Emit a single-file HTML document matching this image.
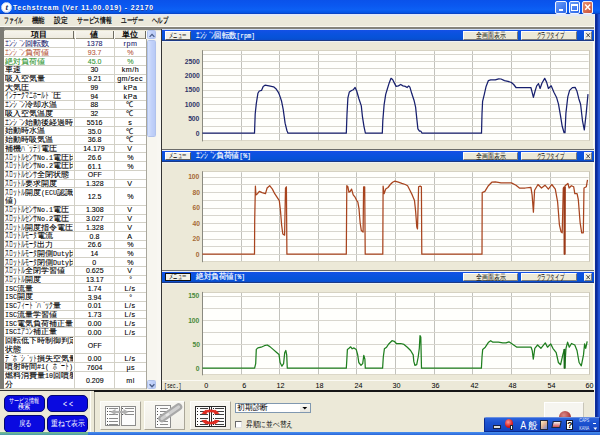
<!DOCTYPE html>
<html><head><meta charset="utf-8"><style>*{margin:0;padding:0;box-sizing:border-box}
html,body{width:600px;height:435px;overflow:hidden;background:#ece9d8;font-family:'Liberation Sans', sans-serif;position:relative}
.a{position:absolute}
.t{position:absolute;white-space:nowrap}</style></head>
<body><div class="a" style="left:0.00px;top:0.00px;width:600.00px;height:14.30px;background:linear-gradient(#0a52ea 0%,#0a58f0 40%,#0c60f4 70%,#0454e4 90%,#0a3cb8 100%)"></div><div class="a" style="left:1.2px;top:1.6px;width:11px;height:11px;border-radius:50%;background:radial-gradient(circle at 45% 40%,#ffffff 55%,#b8c8e8 100%);border:0.8px solid #c8d8f4"></div><div class="a" style="left:555.3px;top:1.3px;width:11.4px;height:12.4px;border:1px solid #f0f4ff;border-radius:2px;background:linear-gradient(135deg,#6a9cf8,#2a66e8)"></div><div class="a" style="left:568.7px;top:1.3px;width:11.4px;height:12.4px;border:1px solid #f0f4ff;border-radius:2px;background:linear-gradient(135deg,#6a9cf8,#2a66e8)"></div><div class="a" style="left:582.0px;top:1.3px;width:11.4px;height:12.4px;border:1px solid #f0f4ff;border-radius:2px;background:linear-gradient(135deg,#e8906e,#c8503a)"></div><div class="a" style="left:558.60px;top:9.40px;width:4.00px;height:1.60px;background:#fff"></div><div class="a" style="left:571.0px;top:3.6px;width:6.8px;height:7px;border:1px solid #fff;border-top-width:2px"></div><svg class="a" style="left:582px;top:1.3px" width="11.4" height="12.4"><path d="M3.2 3.6 L8.2 8.8 M8.2 3.6 L3.2 8.8" stroke="#fff" stroke-width="1.5"/></svg><div class="a" style="left:594.20px;top:14.30px;width:1.10px;height:420.70px;background:#f0f0ec"></div><div class="a" style="left:595.30px;top:14.30px;width:4.70px;height:420.70px;background:linear-gradient(90deg,#0c2c9c 0%,#0a2a98 40%,#1a48c8 60%,#2a5ad8 100%)"></div><div class="a" style="left:0.00px;top:14.30px;width:594.20px;height:12.30px;background:#ebe9db"></div><div class="a" style="left:0.00px;top:14.30px;width:594.20px;height:1.30px;background:#e2e8f4"></div><div class="a" style="left:0.00px;top:25.60px;width:594.20px;height:1.20px;background:#fbfaf4"></div><div class="a" style="left:0.00px;top:26.80px;width:594.20px;height:3.60px;background:#85847c"></div><div class="a" style="left:0.00px;top:26.80px;width:3.60px;height:364.20px;background:#7c7b74"></div><div class="a" style="left:3.60px;top:30.40px;width:0.60px;height:360.60px;background:#a4a39a"></div><div class="a" style="left:4.00px;top:30.50px;width:142.40px;height:358.40px;background:#ffffff"></div><div class="a" style="left:4.00px;top:30.50px;width:142.40px;height:8.80px;background:linear-gradient(#f6f4ec,#eeebe0);border-bottom:1.5px solid #9c9884"></div><div class="a" style="left:73.10px;top:30.90px;width:1.40px;height:8.20px;background:#6e6c60"></div><div class="a" style="left:74.50px;top:30.90px;width:0.90px;height:8.20px;background:#fcfcf8"></div><div class="a" style="left:112.90px;top:30.90px;width:1.40px;height:8.20px;background:#6e6c60"></div><div class="a" style="left:114.30px;top:30.90px;width:0.90px;height:8.20px;background:#fcfcf8"></div><div class="a" style="left:145.00px;top:30.90px;width:1.40px;height:8.20px;background:#6e6c60"></div><div class="a" style="left:146.40px;top:30.90px;width:0.90px;height:8.20px;background:#fcfcf8"></div><div class="a" style="left:4.00px;top:47.44px;width:142.40px;height:1.00px;background:#d2d0c6"></div><div class="a" style="left:4.00px;top:56.18px;width:142.40px;height:1.00px;background:#d2d0c6"></div><div class="a" style="left:4.00px;top:64.92px;width:142.40px;height:1.00px;background:#d2d0c6"></div><div class="a" style="left:4.00px;top:73.66px;width:142.40px;height:1.00px;background:#d2d0c6"></div><div class="a" style="left:4.00px;top:82.40px;width:142.40px;height:1.00px;background:#d2d0c6"></div><div class="a" style="left:4.00px;top:91.14px;width:142.40px;height:1.00px;background:#d2d0c6"></div><div class="a" style="left:4.00px;top:99.88px;width:142.40px;height:1.00px;background:#d2d0c6"></div><div class="a" style="left:4.00px;top:108.62px;width:142.40px;height:1.00px;background:#d2d0c6"></div><div class="a" style="left:4.00px;top:117.36px;width:142.40px;height:1.00px;background:#d2d0c6"></div><div class="a" style="left:4.00px;top:126.10px;width:142.40px;height:1.00px;background:#d2d0c6"></div><div class="a" style="left:4.00px;top:134.84px;width:142.40px;height:1.00px;background:#d2d0c6"></div><div class="a" style="left:4.00px;top:143.58px;width:142.40px;height:1.00px;background:#d2d0c6"></div><div class="a" style="left:4.00px;top:152.32px;width:142.40px;height:1.00px;background:#d2d0c6"></div><div class="a" style="left:4.00px;top:161.06px;width:142.40px;height:1.00px;background:#d2d0c6"></div><div class="a" style="left:4.00px;top:169.80px;width:142.40px;height:1.00px;background:#d2d0c6"></div><div class="a" style="left:4.00px;top:178.54px;width:142.40px;height:1.00px;background:#d2d0c6"></div><div class="a" style="left:4.00px;top:187.28px;width:142.40px;height:1.00px;background:#d2d0c6"></div><div class="a" style="left:4.00px;top:204.76px;width:142.40px;height:1.00px;background:#d2d0c6"></div><div class="a" style="left:4.00px;top:213.50px;width:142.40px;height:1.00px;background:#d2d0c6"></div><div class="a" style="left:4.00px;top:222.24px;width:142.40px;height:1.00px;background:#d2d0c6"></div><div class="a" style="left:4.00px;top:230.98px;width:142.40px;height:1.00px;background:#d2d0c6"></div><div class="a" style="left:4.00px;top:239.72px;width:142.40px;height:1.00px;background:#d2d0c6"></div><div class="a" style="left:4.00px;top:248.46px;width:142.40px;height:1.00px;background:#d2d0c6"></div><div class="a" style="left:4.00px;top:257.20px;width:142.40px;height:1.00px;background:#d2d0c6"></div><div class="a" style="left:4.00px;top:265.94px;width:142.40px;height:1.00px;background:#d2d0c6"></div><div class="a" style="left:4.00px;top:274.68px;width:142.40px;height:1.00px;background:#d2d0c6"></div><div class="a" style="left:4.00px;top:283.42px;width:142.40px;height:1.00px;background:#d2d0c6"></div><div class="a" style="left:4.00px;top:292.16px;width:142.40px;height:1.00px;background:#d2d0c6"></div><div class="a" style="left:4.00px;top:300.90px;width:142.40px;height:1.00px;background:#d2d0c6"></div><div class="a" style="left:4.00px;top:309.64px;width:142.40px;height:1.00px;background:#d2d0c6"></div><div class="a" style="left:4.00px;top:318.38px;width:142.40px;height:1.00px;background:#d2d0c6"></div><div class="a" style="left:4.00px;top:327.12px;width:142.40px;height:1.00px;background:#d2d0c6"></div><div class="a" style="left:4.00px;top:335.86px;width:142.40px;height:1.00px;background:#d2d0c6"></div><div class="a" style="left:4.00px;top:353.34px;width:142.40px;height:1.00px;background:#d2d0c6"></div><div class="a" style="left:4.00px;top:362.08px;width:142.40px;height:1.00px;background:#d2d0c6"></div><div class="a" style="left:4.00px;top:370.82px;width:142.40px;height:1.00px;background:#d2d0c6"></div><div class="a" style="left:4.00px;top:388.30px;width:142.40px;height:1.00px;background:#d2d0c6"></div><div class="a" style="left:73.80px;top:39.30px;width:1.00px;height:349.60px;background:#d2d0c6"></div><div class="a" style="left:113.60px;top:39.30px;width:1.00px;height:349.60px;background:#d2d0c6"></div><div class="a" style="left:145.80px;top:39.30px;width:1.00px;height:349.60px;background:#a8a69c"></div><div class="a" style="left:146.60px;top:30.50px;width:10.00px;height:359.10px;background:#f7f6f0"></div><div class="a" style="left:146.90px;top:30.30px;width:9.50px;height:8.60px;background:linear-gradient(90deg,#d4e0fc,#c2d2fa 50%,#b8caf6);border:0.8px solid #b0c2ec;border-radius:1.5px"></div><svg class="a" style="left:146.6px;top:30.7px" width="10" height="9"><path d="M2.6 5.9 L5 3.4 L7.4 5.9" stroke="#4a5e88" stroke-width="1.3" fill="none"/></svg><div class="a" style="left:146.90px;top:39.50px;width:9.50px;height:97.90px;background:linear-gradient(90deg,#d4e0fc,#c2d2fa 50%,#b8caf6);border:0.8px solid #b0c2ec;border-radius:1.5px"></div><div class="a" style="left:146.90px;top:380.30px;width:9.50px;height:9.10px;background:linear-gradient(90deg,#d4e0fc,#c2d2fa 50%,#b8caf6);border:0.8px solid #b0c2ec;border-radius:1.5px"></div><svg class="a" style="left:146.6px;top:380.5px" width="10" height="9"><path d="M2.6 3.2 L5 5.7 L7.4 3.2" stroke="#4a5e88" stroke-width="1.3" fill="none"/></svg><div class="a" style="left:156.60px;top:30.50px;width:4.40px;height:360.50px;background:#f8f7f2"></div><div class="a" style="left:160.70px;top:28.60px;width:1.10px;height:362.40px;background:#343434"></div><div class="a" style="left:161.80px;top:28.90px;width:432.40px;height:1.40px;background:linear-gradient(#e4ecf8,#b8cef4)"></div><div class="a" style="left:161.80px;top:30.30px;width:432.40px;height:10.00px;background:linear-gradient(#1450e6,#0a52de 40%,#0652d8 75%,#0a4ccc)"></div><div class="a" style="left:161.80px;top:40.30px;width:432.40px;height:0.80px;background:#1c3a84"></div><div class="a" style="left:161.80px;top:41.10px;width:432.40px;height:1.00px;background:#eef2f4"></div><div class="a" style="left:164.70px;top:31.20px;width:25.90px;height:8.50px;background:#f2f0e8;border-right:1px solid #5a5a5a;border-bottom:1px solid #5a5a5a;border-left:1px solid #fff;border-top:1px solid #fff"></div><div class="a" style="left:462.50px;top:31.00px;width:55.50px;height:8.80px;background:#ece9d8;border-right:1px solid #7a7a7a;border-bottom:1px solid #7a7a7a;border-left:1px solid #fdfdfd;border-top:1px solid #fdfdfd"></div><div class="a" style="left:521.20px;top:31.00px;width:56.30px;height:8.80px;background:#ece9d8;border-right:1px solid #7a7a7a;border-bottom:1px solid #7a7a7a;border-left:1px solid #fdfdfd;border-top:1px solid #fdfdfd"></div><div class="a" style="left:583.70px;top:31.00px;width:8.60px;height:8.80px;background:#eeebe0;border-right:1px solid #7a7a7a;border-bottom:1px solid #7a7a7a;border-left:1px solid #fdfdfd;border-top:1px solid #fdfdfd"></div><svg class="a" style="left:583.7px;top:31.00px" width="8.6" height="8.80"><path d="M2.4 2.2 L6.0 6.2 M6.0 2.2 L2.4 6.2" stroke="#3a3a3a" stroke-width="0.9"/></svg><div class="a" style="left:161.80px;top:148.50px;width:432.40px;height:1.00px;background:#6c6c6a"></div><div class="a" style="left:161.80px;top:149.50px;width:432.40px;height:1.50px;background:linear-gradient(#fafaf8,#dce4f4)"></div><div class="a" style="left:590.20px;top:42.10px;width:3.20px;height:106.40px;background:#ece9d8"></div><div class="a" style="left:593.20px;top:42.10px;width:1.00px;height:106.40px;background:#fbfbf8"></div><div class="a" style="left:202.40px;top:50.20px;width:387.20px;height:91.20px;background:#fffffc;border-top:1px solid #d6d2c2;border-right:1px solid #c8c4b4;border-bottom:1px solid #dcd8c8"></div><div class="a" style="left:161.80px;top:151.00px;width:432.40px;height:10.00px;background:linear-gradient(#1450e6,#0a52de 40%,#0652d8 75%,#0a4ccc)"></div><div class="a" style="left:161.80px;top:161.00px;width:432.40px;height:0.80px;background:#1c3a84"></div><div class="a" style="left:161.80px;top:161.80px;width:432.40px;height:1.00px;background:#eef2f4"></div><div class="a" style="left:164.70px;top:151.90px;width:25.90px;height:8.50px;background:#f2f0e8;border-right:1px solid #5a5a5a;border-bottom:1px solid #5a5a5a;border-left:1px solid #fff;border-top:1px solid #fff"></div><div class="a" style="left:462.50px;top:151.70px;width:55.50px;height:8.80px;background:#ece9d8;border-right:1px solid #7a7a7a;border-bottom:1px solid #7a7a7a;border-left:1px solid #fdfdfd;border-top:1px solid #fdfdfd"></div><div class="a" style="left:521.20px;top:151.70px;width:56.30px;height:8.80px;background:#ece9d8;border-right:1px solid #7a7a7a;border-bottom:1px solid #7a7a7a;border-left:1px solid #fdfdfd;border-top:1px solid #fdfdfd"></div><div class="a" style="left:583.70px;top:151.70px;width:8.60px;height:8.80px;background:#eeebe0;border-right:1px solid #7a7a7a;border-bottom:1px solid #7a7a7a;border-left:1px solid #fdfdfd;border-top:1px solid #fdfdfd"></div><svg class="a" style="left:583.7px;top:151.70px" width="8.6" height="8.80"><path d="M2.4 2.2 L6.0 6.2 M6.0 2.2 L2.4 6.2" stroke="#3a3a3a" stroke-width="0.9"/></svg><div class="a" style="left:161.80px;top:269.60px;width:432.40px;height:1.00px;background:#6c6c6a"></div><div class="a" style="left:161.80px;top:270.60px;width:432.40px;height:1.40px;background:linear-gradient(#fafaf8,#dce4f4)"></div><div class="a" style="left:590.20px;top:162.80px;width:3.20px;height:106.80px;background:#ece9d8"></div><div class="a" style="left:593.20px;top:162.80px;width:1.00px;height:106.80px;background:#fbfbf8"></div><div class="a" style="left:202.40px;top:171.30px;width:387.20px;height:90.90px;background:#fffffc;border-top:1px solid #d6d2c2;border-right:1px solid #c8c4b4;border-bottom:1px solid #dcd8c8"></div><div class="a" style="left:161.80px;top:272.00px;width:432.40px;height:9.80px;background:linear-gradient(#1450e6,#0a52de 40%,#0652d8 75%,#0a4ccc)"></div><div class="a" style="left:161.80px;top:281.80px;width:432.40px;height:0.80px;background:#1c3a84"></div><div class="a" style="left:161.80px;top:282.60px;width:432.40px;height:1.00px;background:#eef2f4"></div><div class="a" style="left:164.70px;top:272.90px;width:25.90px;height:8.30px;background:#f2f0e8;border:1px solid #101010"></div><div class="a" style="left:462.50px;top:272.70px;width:55.50px;height:8.60px;background:#ece9d8;border-right:1px solid #7a7a7a;border-bottom:1px solid #7a7a7a;border-left:1px solid #fdfdfd;border-top:1px solid #fdfdfd"></div><div class="a" style="left:521.20px;top:272.70px;width:56.30px;height:8.60px;background:#ece9d8;border-right:1px solid #7a7a7a;border-bottom:1px solid #7a7a7a;border-left:1px solid #fdfdfd;border-top:1px solid #fdfdfd"></div><div class="a" style="left:583.70px;top:272.70px;width:8.60px;height:8.60px;background:#eeebe0;border-right:1px solid #7a7a7a;border-bottom:1px solid #7a7a7a;border-left:1px solid #fdfdfd;border-top:1px solid #fdfdfd"></div><svg class="a" style="left:583.7px;top:272.70px" width="8.6" height="8.60"><path d="M2.4 2.2 L6.0 6.2 M6.0 2.2 L2.4 6.2" stroke="#3a3a3a" stroke-width="0.9"/></svg><div class="a" style="left:590.20px;top:283.60px;width:3.20px;height:97.00px;background:#ece9d8"></div><div class="a" style="left:593.20px;top:283.60px;width:1.00px;height:107.40px;background:#fbfbf8"></div><div class="a" style="left:202.40px;top:291.90px;width:387.20px;height:83.40px;background:#fffffc;border-top:1px solid #d6d2c2;border-right:1px solid #c8c4b4;border-bottom:1px solid #dcd8c8"></div><div class="a" style="left:161.80px;top:380.40px;width:432.40px;height:0.90px;background:#fbfaf4"></div><div class="a" style="left:93.60px;top:390.40px;width:500.60px;height:1.40px;background:#161616"></div><svg class="a" style="left:0;top:0" width="600" height="435" viewBox="0 0 600 435"><line x1="241.50" y1="51.20" x2="241.50" y2="140.40" stroke="#c2c2bc" stroke-width="1"/><line x1="279.50" y1="51.20" x2="279.50" y2="140.40" stroke="#c2c2bc" stroke-width="1"/><line x1="318.50" y1="51.20" x2="318.50" y2="140.40" stroke="#c2c2bc" stroke-width="1"/><line x1="356.50" y1="51.20" x2="356.50" y2="140.40" stroke="#c2c2bc" stroke-width="1"/><line x1="395.50" y1="51.20" x2="395.50" y2="140.40" stroke="#c2c2bc" stroke-width="1"/><line x1="434.50" y1="51.20" x2="434.50" y2="140.40" stroke="#c2c2bc" stroke-width="1"/><line x1="472.50" y1="51.20" x2="472.50" y2="140.40" stroke="#c2c2bc" stroke-width="1"/><line x1="511.50" y1="51.20" x2="511.50" y2="140.40" stroke="#c2c2bc" stroke-width="1"/><line x1="550.50" y1="51.20" x2="550.50" y2="140.40" stroke="#c2c2bc" stroke-width="1"/><line x1="202.40" y1="133.50" x2="588.60" y2="133.50" stroke="#d8d6ce" stroke-width="1"/><line x1="202.40" y1="126.50" x2="588.60" y2="126.50" stroke="#d8d6ce" stroke-width="1"/><line x1="202.40" y1="118.50" x2="588.60" y2="118.50" stroke="#d8d6ce" stroke-width="1"/><line x1="202.40" y1="111.50" x2="588.60" y2="111.50" stroke="#d8d6ce" stroke-width="1"/><line x1="202.40" y1="104.50" x2="588.60" y2="104.50" stroke="#d8d6ce" stroke-width="1"/><line x1="202.40" y1="97.50" x2="588.60" y2="97.50" stroke="#d8d6ce" stroke-width="1"/><line x1="202.40" y1="90.50" x2="588.60" y2="90.50" stroke="#d8d6ce" stroke-width="1"/><line x1="202.40" y1="82.50" x2="588.60" y2="82.50" stroke="#d8d6ce" stroke-width="1"/><line x1="202.40" y1="75.50" x2="588.60" y2="75.50" stroke="#d8d6ce" stroke-width="1"/><line x1="202.40" y1="68.50" x2="588.60" y2="68.50" stroke="#d8d6ce" stroke-width="1"/><line x1="202.40" y1="61.50" x2="588.60" y2="61.50" stroke="#d8d6ce" stroke-width="1"/><line x1="202.40" y1="54.50" x2="588.60" y2="54.50" stroke="#d8d6ce" stroke-width="1"/><line x1="202.5" y1="50.20" x2="202.5" y2="141.40" stroke="#8a8a80" stroke-width="1"/><polyline points="202.4,133.2 254.5,133.2 255.2,114.0 256.3,103.6 257.9,93.3 259.3,91.0 261.6,90.3 263.2,86.4 265.0,85.2 269.0,85.9 273.6,86.8 275.9,88.7 278.2,92.1 279.3,94.4 281.6,101.3 283.2,109.4 285.1,123.2 286.9,130.5 288.0,133.2 346.3,133.2 347.0,114.0 347.9,97.9 349.3,92.1 351.6,90.5 353.2,89.8 355.1,87.5 356.7,91.0 359.0,99.0 361.3,105.9 362.4,116.3 364.0,126.6 365.4,133.2 382.3,133.2 382.8,120.9 384.1,104.8 385.7,94.4 387.4,88.7 389.2,82.9 391.0,78.3 392.6,79.5 394.3,82.9 396.1,86.4 398.4,85.9 400.7,84.5 403.0,85.9 405.3,86.4 407.1,87.5 408.7,85.9 409.9,87.1 411.7,93.3 414.0,100.2 415.6,107.1 416.8,118.6 417.9,128.9 419.5,131.2 420.9,131.2 422.1,133.2 481.5,133.2 482.0,114.0 482.6,101.3 484.3,94.4 486.1,86.4 488.4,80.6 490.7,79.9 495.3,79.9 498.7,78.8 501.0,79.0 504.5,80.6 507.9,81.3 511.4,82.5 513.7,84.5 516.0,87.5 518.3,87.5 530.9,87.5 532.1,92.1 533.4,97.4 535.1,91.0 536.7,85.9 538.5,83.6 540.1,88.5 542.0,83.0 544.7,78.4 546.6,82.1 548.4,88.5 551.2,85.8 553.9,92.2 556.7,97.8 558.5,104.2 560.4,115.2 562.2,126.3 564.1,132.7 565.0,132.7 565.9,113.4 567.8,96.8 569.6,90.4 572.4,87.6 575.1,87.3 577.0,91.3 578.8,98.7 580.6,104.2 582.5,120.8 584.3,130.0 586.2,113.4 588.0,94.1" fill="none" stroke="#18206e" stroke-width="1.25" stroke-linejoin="round"/><line x1="241.50" y1="172.30" x2="241.50" y2="261.20" stroke="#c2c2bc" stroke-width="1"/><line x1="279.50" y1="172.30" x2="279.50" y2="261.20" stroke="#c2c2bc" stroke-width="1"/><line x1="318.50" y1="172.30" x2="318.50" y2="261.20" stroke="#c2c2bc" stroke-width="1"/><line x1="356.50" y1="172.30" x2="356.50" y2="261.20" stroke="#c2c2bc" stroke-width="1"/><line x1="395.50" y1="172.30" x2="395.50" y2="261.20" stroke="#c2c2bc" stroke-width="1"/><line x1="434.50" y1="172.30" x2="434.50" y2="261.20" stroke="#c2c2bc" stroke-width="1"/><line x1="472.50" y1="172.30" x2="472.50" y2="261.20" stroke="#c2c2bc" stroke-width="1"/><line x1="511.50" y1="172.30" x2="511.50" y2="261.20" stroke="#c2c2bc" stroke-width="1"/><line x1="550.50" y1="172.30" x2="550.50" y2="261.20" stroke="#c2c2bc" stroke-width="1"/><line x1="202.40" y1="254.50" x2="588.60" y2="254.50" stroke="#d8d6ce" stroke-width="1"/><line x1="202.40" y1="246.50" x2="588.60" y2="246.50" stroke="#d8d6ce" stroke-width="1"/><line x1="202.40" y1="239.50" x2="588.60" y2="239.50" stroke="#d8d6ce" stroke-width="1"/><line x1="202.40" y1="231.50" x2="588.60" y2="231.50" stroke="#d8d6ce" stroke-width="1"/><line x1="202.40" y1="223.50" x2="588.60" y2="223.50" stroke="#d8d6ce" stroke-width="1"/><line x1="202.40" y1="215.50" x2="588.60" y2="215.50" stroke="#d8d6ce" stroke-width="1"/><line x1="202.40" y1="208.50" x2="588.60" y2="208.50" stroke="#d8d6ce" stroke-width="1"/><line x1="202.40" y1="200.50" x2="588.60" y2="200.50" stroke="#d8d6ce" stroke-width="1"/><line x1="202.40" y1="192.50" x2="588.60" y2="192.50" stroke="#d8d6ce" stroke-width="1"/><line x1="202.40" y1="184.50" x2="588.60" y2="184.50" stroke="#d8d6ce" stroke-width="1"/><line x1="202.40" y1="177.50" x2="588.60" y2="177.50" stroke="#d8d6ce" stroke-width="1"/><line x1="202.5" y1="171.30" x2="202.5" y2="262.20" stroke="#8a8a80" stroke-width="1"/><polyline points="202.4,254.2 254.5,254.2 254.7,220.2 255.4,186.1 255.9,194.9 257.5,193.7 259.3,191.4 262.1,192.6 265.5,193.7 267.1,188.0 269.7,185.7 272.4,189.1 274.7,193.7 277.0,197.2 279.3,200.6 280.5,211.0 281.6,224.8 282.8,234.0 284.6,235.1 285.5,188.0 286.4,186.8 286.9,254.2 346.3,254.2 346.8,185.7 347.9,186.8 348.9,192.1 350.2,191.4 351.6,189.1 353.2,194.9 355.1,197.2 356.7,200.6 357.8,201.8 359.0,208.7 360.1,222.5 361.3,230.5 363.1,232.1 363.6,186.8 364.7,186.8 365.2,254.2 382.8,254.2 383.1,186.1 384.1,193.7 385.7,189.1 388.0,187.5 390.3,184.5 392.6,182.2 394.9,181.1 398.4,182.2 401.8,183.4 405.3,184.5 407.6,185.7 409.9,190.3 412.2,194.9 414.5,200.6 415.6,211.0 416.8,227.1 417.5,228.9 418.6,186.8 420.2,186.1 421.4,186.8 421.8,254.2 482.0,254.2 482.2,192.6 484.9,191.4 488.4,185.7 491.8,182.2 495.3,181.8 501.0,182.9 511.4,182.9 516.0,185.2 519.4,188.0 525.2,188.0 530.9,187.3 532.1,194.9 533.4,212.1 534.6,190.3 538.0,184.5 541.5,188.0 545.0,185.2 548.4,189.1 551.8,184.5 555.3,189.1 557.6,201.8 559.4,224.8 561.0,231.7 562.2,232.8 563.3,188.0 564.2,186.8 564.6,254.2 565.1,185.7 567.9,183.4 569.1,188.0 571.4,185.7 573.7,186.8 574.8,193.7 577.1,193.7 578.3,199.5 580.1,222.5 581.7,232.8 583.3,232.8 584.0,188.0 586.3,186.8 587.5,179.9" fill="none" stroke="#a8441e" stroke-width="1.25" stroke-linejoin="round"/><line x1="241.50" y1="292.90" x2="241.50" y2="374.30" stroke="#c2c2bc" stroke-width="1"/><line x1="279.50" y1="292.90" x2="279.50" y2="374.30" stroke="#c2c2bc" stroke-width="1"/><line x1="318.50" y1="292.90" x2="318.50" y2="374.30" stroke="#c2c2bc" stroke-width="1"/><line x1="356.50" y1="292.90" x2="356.50" y2="374.30" stroke="#c2c2bc" stroke-width="1"/><line x1="395.50" y1="292.90" x2="395.50" y2="374.30" stroke="#c2c2bc" stroke-width="1"/><line x1="434.50" y1="292.90" x2="434.50" y2="374.30" stroke="#c2c2bc" stroke-width="1"/><line x1="472.50" y1="292.90" x2="472.50" y2="374.30" stroke="#c2c2bc" stroke-width="1"/><line x1="511.50" y1="292.90" x2="511.50" y2="374.30" stroke="#c2c2bc" stroke-width="1"/><line x1="550.50" y1="292.90" x2="550.50" y2="374.30" stroke="#c2c2bc" stroke-width="1"/><line x1="202.40" y1="368.50" x2="588.60" y2="368.50" stroke="#d8d6ce" stroke-width="1"/><line x1="202.40" y1="356.50" x2="588.60" y2="356.50" stroke="#d8d6ce" stroke-width="1"/><line x1="202.40" y1="344.50" x2="588.60" y2="344.50" stroke="#d8d6ce" stroke-width="1"/><line x1="202.40" y1="332.50" x2="588.60" y2="332.50" stroke="#d8d6ce" stroke-width="1"/><line x1="202.40" y1="320.50" x2="588.60" y2="320.50" stroke="#d8d6ce" stroke-width="1"/><line x1="202.40" y1="308.50" x2="588.60" y2="308.50" stroke="#d8d6ce" stroke-width="1"/><line x1="202.40" y1="296.50" x2="588.60" y2="296.50" stroke="#d8d6ce" stroke-width="1"/><line x1="202.5" y1="291.90" x2="202.5" y2="375.30" stroke="#8a8a80" stroke-width="1"/><polyline points="202.4,368.2 254.6,368.2 255.7,363.6 256.3,349.4 257.9,347.9 261.1,347.2 264.4,345.7 267.2,345.0 269.9,346.6 273.1,349.4 276.4,352.2 279.0,354.4 280.1,362.5 281.9,366.2 283.6,363.6 284.7,352.7 285.8,350.5 286.7,354.9 287.3,368.2 346.3,368.2 346.8,360.3 347.4,349.4 349.0,348.3 350.7,346.8 352.2,348.8 354.0,347.9 356.2,349.4 357.7,354.9 358.8,362.5 361.0,365.3 362.7,363.6 363.8,355.3 364.9,359.2 365.3,368.2 382.6,368.2 383.3,357.0 384.4,348.8 386.6,347.2 388.7,344.0 392.0,340.7 394.2,341.3 396.4,343.5 400.7,343.5 404.0,344.4 407.3,347.2 410.6,350.5 413.2,354.9 413.8,361.4 414.9,365.3 416.7,364.7 418.2,357.0 419.3,348.3 420.0,335.7 420.8,337.0 421.5,368.2 481.4,368.2 482.0,357.0 482.7,349.4 485.3,347.2 488.6,342.2 490.7,340.7 492.9,342.2 498.4,342.2 502.8,342.9 506.0,342.9 508.9,341.8 511.5,343.5 516.9,347.2 531.1,347.2 532.2,350.5 533.3,359.2 534.8,348.3 537.6,345.0 540.9,348.3 545.3,342.9 547.5,347.2 550.7,343.9 552.9,348.3 556.2,352.7 558.4,362.5 560.6,364.7 562.8,354.9 564.3,349.4 564.7,368.2 566.0,348.3 567.6,342.2 569.3,347.2 571.5,343.5 574.8,345.0 577.0,350.5 579.1,362.5 581.3,365.8 583.5,354.9 584.6,343.9 585.7,348.3 587.2,341.3" fill="none" stroke="#1f7f1f" stroke-width="1.25" stroke-linejoin="round"/><line x1="564.6" y1="187" x2="564.6" y2="254.5" stroke="#9a3a18" stroke-width="2"/><line x1="564.6" y1="349" x2="564.6" y2="368.5" stroke="#1a6a1a" stroke-width="2"/></svg><div class="a" style="left:0.00px;top:388.90px;width:93.60px;height:43.10px;background:#ece9d8"></div><div class="a" style="left:0.00px;top:390.30px;width:93.60px;height:1.20px;background:#303030"></div><div class="a" style="left:90.40px;top:391.00px;width:1.00px;height:41.00px;background:#fdfdf8"></div><div class="a" style="left:93.60px;top:391.80px;width:1.00px;height:40.20px;background:#a09d90"></div><div class="a" style="left:94.60px;top:391.80px;width:499.60px;height:40.20px;background:#ece9d8"></div><div class="a" style="left:3.7px;top:395px;width:41.6px;height:17.2px;background:#0a0ae0;border:1px solid #040870;border-radius:5px"></div><div class="a" style="left:47px;top:395px;width:41.3px;height:17.2px;background:#0a0ae0;border:1px solid #040870;border-radius:5px"></div><div class="a" style="left:3.7px;top:415.3px;width:41.6px;height:17.3px;background:#0a0ae0;border:1px solid #040870;border-radius:5px"></div><div class="a" style="left:47px;top:415.3px;width:41.3px;height:17.3px;background:#0a0ae0;border:1px solid #040870;border-radius:5px"></div><div class="a" style="left:99.50px;top:400.60px;width:41.10px;height:29.80px;background:linear-gradient(#f8f7f2,#f0eee6);border-top:1px solid #fdfdfa;border-left:1px solid #fdfdfa;border-right:1.2px solid #aaa698;border-bottom:1.4px solid #aaa698"></div><div class="a" style="left:143.80px;top:400.60px;width:41.10px;height:29.80px;background:linear-gradient(#f8f7f2,#f0eee6);border-top:1px solid #fdfdfa;border-left:1px solid #fdfdfa;border-right:1.2px solid #aaa698;border-bottom:1.4px solid #aaa698"></div><div class="a" style="left:189.50px;top:400.60px;width:41.10px;height:29.80px;background:linear-gradient(#f8f7f2,#f0eee6);border-top:1px solid #fdfdfa;border-left:1px solid #fdfdfa;border-right:1.2px solid #aaa698;border-bottom:1.4px solid #aaa698"></div><div class="a" style="left:105.00px;top:406.20px;width:14.80px;height:20.00px;background:#fcfcfc;border:1px solid #8c8c8c"></div><div class="a" style="left:120.60px;top:406.20px;width:15.00px;height:20.00px;background:#fcfcfc;border:1px solid #8c8c8c"></div><div class="a" style="left:106.80px;top:408.20px;width:1.10px;height:1.00px;background:#505050"></div><div class="a" style="left:109.40px;top:408.20px;width:8.80px;height:1.00px;background:#8a8a8a"></div><div class="a" style="left:122.40px;top:408.20px;width:1.10px;height:1.00px;background:#505050"></div><div class="a" style="left:125.00px;top:408.20px;width:9.00px;height:1.00px;background:#8a8a8a"></div><div class="a" style="left:106.80px;top:411.30px;width:1.10px;height:1.00px;background:#505050"></div><div class="a" style="left:109.40px;top:411.30px;width:8.80px;height:1.00px;background:#8a8a8a"></div><div class="a" style="left:122.40px;top:411.30px;width:1.10px;height:1.00px;background:#505050"></div><div class="a" style="left:125.00px;top:411.30px;width:9.00px;height:1.00px;background:#8a8a8a"></div><div class="a" style="left:106.80px;top:414.40px;width:1.10px;height:1.00px;background:#505050"></div><div class="a" style="left:109.40px;top:414.40px;width:8.80px;height:1.00px;background:#8a8a8a"></div><div class="a" style="left:122.40px;top:414.40px;width:1.10px;height:1.00px;background:#505050"></div><div class="a" style="left:125.00px;top:414.40px;width:9.00px;height:1.00px;background:#8a8a8a"></div><div class="a" style="left:106.80px;top:417.50px;width:1.10px;height:1.00px;background:#505050"></div><div class="a" style="left:109.40px;top:417.50px;width:8.80px;height:1.00px;background:#8a8a8a"></div><div class="a" style="left:106.80px;top:420.60px;width:1.10px;height:1.00px;background:#505050"></div><div class="a" style="left:109.40px;top:420.60px;width:8.80px;height:1.00px;background:#8a8a8a"></div><div class="a" style="left:106.80px;top:423.70px;width:1.10px;height:1.00px;background:#505050"></div><div class="a" style="left:109.40px;top:423.70px;width:8.80px;height:1.00px;background:#8a8a8a"></div><svg class="a" style="left:110px;top:408px" width="20" height="8"><path d="M2 4 L17 4" stroke="#b0b0b0" stroke-width="2.2"/><path d="M13.5 1 L18.5 4 L13.5 7Z" fill="#b0b0b0"/><path d="M5.5 1 L0.5 4 L5.5 7Z" fill="#b0b0b0"/></svg><div class="a" style="left:155.20px;top:405.20px;width:15.60px;height:22.40px;background:#fcfcfc;border:1px solid #8c8c8c"></div><div class="a" style="left:157.00px;top:408.20px;width:1.10px;height:1.00px;background:#505050"></div><div class="a" style="left:159.60px;top:408.20px;width:8.80px;height:1.00px;background:#8a8a8a"></div><div class="a" style="left:157.00px;top:411.30px;width:1.10px;height:1.00px;background:#505050"></div><div class="a" style="left:159.60px;top:411.30px;width:8.80px;height:1.00px;background:#8a8a8a"></div><div class="a" style="left:157.00px;top:414.40px;width:1.10px;height:1.00px;background:#505050"></div><div class="a" style="left:159.60px;top:414.40px;width:8.80px;height:1.00px;background:#8a8a8a"></div><div class="a" style="left:157.00px;top:417.50px;width:1.10px;height:1.00px;background:#505050"></div><div class="a" style="left:159.60px;top:417.50px;width:8.80px;height:1.00px;background:#8a8a8a"></div><div class="a" style="left:157.00px;top:420.60px;width:1.10px;height:1.00px;background:#505050"></div><div class="a" style="left:159.60px;top:420.60px;width:8.80px;height:1.00px;background:#8a8a8a"></div><div class="a" style="left:157.00px;top:423.70px;width:1.10px;height:1.00px;background:#505050"></div><div class="a" style="left:159.60px;top:423.70px;width:8.80px;height:1.00px;background:#8a8a8a"></div><svg class="a" style="left:155px;top:402px" width="30" height="22"><path d="M7 16.5 L23.5 5" stroke="#a8a8a8" stroke-width="7.5" stroke-linecap="round"/><path d="M7 16.5 L23.5 5" stroke="#d0d0d0" stroke-width="3.2" stroke-linecap="round"/><path d="M11 13.8 L14 11.6" stroke="#e8e8e8" stroke-width="2.4"/></svg><div class="a" style="left:195.00px;top:406.20px;width:31.00px;height:20.40px;background:#fcfcfc;border:1.1px solid #2a2a2a"></div><div class="a" style="left:209.20px;top:406.20px;width:0.90px;height:20.40px;background:#2a2a2a"></div><div class="a" style="left:211.00px;top:406.20px;width:0.90px;height:20.40px;background:#2a2a2a"></div><div class="a" style="left:197.00px;top:408.20px;width:1.10px;height:1.00px;background:#202020"></div><div class="a" style="left:200.00px;top:408.20px;width:8.20px;height:1.00px;background:#404040"></div><div class="a" style="left:212.60px;top:408.20px;width:1.10px;height:1.00px;background:#202020"></div><div class="a" style="left:215.00px;top:408.20px;width:8.80px;height:1.00px;background:#404040"></div><div class="a" style="left:197.00px;top:411.30px;width:1.10px;height:1.00px;background:#202020"></div><div class="a" style="left:200.00px;top:411.30px;width:8.20px;height:1.00px;background:#404040"></div><div class="a" style="left:212.60px;top:411.30px;width:1.10px;height:1.00px;background:#202020"></div><div class="a" style="left:215.00px;top:411.30px;width:8.80px;height:1.00px;background:#404040"></div><div class="a" style="left:197.00px;top:414.40px;width:1.10px;height:1.00px;background:#202020"></div><div class="a" style="left:200.00px;top:414.40px;width:8.20px;height:1.00px;background:#404040"></div><div class="a" style="left:212.60px;top:414.40px;width:1.10px;height:1.00px;background:#202020"></div><div class="a" style="left:215.00px;top:414.40px;width:8.80px;height:1.00px;background:#404040"></div><div class="a" style="left:197.00px;top:417.50px;width:1.10px;height:1.00px;background:#202020"></div><div class="a" style="left:200.00px;top:417.50px;width:8.20px;height:1.00px;background:#404040"></div><div class="a" style="left:212.60px;top:417.50px;width:1.10px;height:1.00px;background:#202020"></div><div class="a" style="left:215.00px;top:417.50px;width:8.80px;height:1.00px;background:#404040"></div><div class="a" style="left:197.00px;top:420.60px;width:1.10px;height:1.00px;background:#202020"></div><div class="a" style="left:200.00px;top:420.60px;width:8.20px;height:1.00px;background:#404040"></div><div class="a" style="left:212.60px;top:420.60px;width:1.10px;height:1.00px;background:#202020"></div><div class="a" style="left:215.00px;top:420.60px;width:8.80px;height:1.00px;background:#404040"></div><div class="a" style="left:197.00px;top:423.70px;width:1.10px;height:1.00px;background:#202020"></div><div class="a" style="left:200.00px;top:423.70px;width:8.20px;height:1.00px;background:#404040"></div><div class="a" style="left:212.60px;top:423.70px;width:1.10px;height:1.00px;background:#202020"></div><div class="a" style="left:215.00px;top:423.70px;width:8.80px;height:1.00px;background:#404040"></div><svg class="a" style="left:196px;top:404px" width="30" height="24"><path d="M8 8.4 Q14.5 5.4 21 8.4" stroke="#e02a20" stroke-width="2.8" fill="none"/><path d="M5.2 9.8 L10.2 5.6 L10.8 10.2Z" fill="#e02a20"/><path d="M23.8 9.8 L18.8 5.6 L18.2 10.2Z" fill="#e02a20"/><path d="M8 17.6 Q14.5 20.6 21 17.6" stroke="#e02a20" stroke-width="2.8" fill="none"/><path d="M5.2 16.2 L10.2 20.4 L10.8 15.8Z" fill="#e02a20"/><path d="M23.8 16.2 L18.8 20.4 L18.2 15.8Z" fill="#e02a20"/></svg><div class="a" style="left:235.00px;top:402.60px;width:75.80px;height:10.20px;background:#fff;border:1px solid #8098b0"></div><div class="a" style="left:300.20px;top:403.60px;width:9.60px;height:8.20px;background:linear-gradient(#fafaf6,#e8e6de)"></div><svg class="a" style="left:300.2px;top:403.6px" width="9.6" height="8.2"><path d="M2.4 3.0 L7.2 3.0 L4.8 5.6Z" fill="#000"/></svg><div class="a" style="left:235.30px;top:420.80px;width:6.50px;height:7.60px;background:#fff;border-left:1px solid #6a6a6a;border-top:1px solid #6a6a6a;border-right:1px solid #e0e0e0;border-bottom:1px solid #e0e0e0"></div><div class="a" style="left:543.60px;top:402.00px;width:40.80px;height:30.00px;background:#f6f5f0;border-left:1px solid #fff;border-top:1px solid #fff;border-right:1px solid #c8c5b8"></div><div class="a" style="left:559.2px;top:411.2px;width:12px;height:12px;border-radius:50%;background:radial-gradient(circle at 40% 35%,#d88a8a,#b04040 55%,#883030)"></div><div class="a" style="left:484.2px;top:416.6px;width:115.8px;height:15.8px;background:linear-gradient(#2c64dc,#1c52d0 35%,#164ac8 70%,#1242bc);border:1px solid #0a2a90;border-top-color:#6a90e0;border-radius:2px 0 0 0"></div><div class="a" style="left:492.60px;top:424.80px;width:8.00px;height:4.00px;background:#dcdcdc;border:1px solid #1a2040"></div><div class="a" style="left:504.6px;top:419.0px;width:8.4px;height:9px;border-radius:50%;background:radial-gradient(circle at 40% 35%,#ff9a9a,#d81818 60%,#801010)"></div><div class="a" style="left:509.80px;top:424.60px;width:2.80px;height:5.80px;background:#ffffff;border:0.6px solid #223"></div><div class="a" style="left:540.20px;top:420.40px;width:8.20px;height:9.20px;background:linear-gradient(135deg,#fff0c8,#e0b090 50%,#6a8ae0);border:1px solid #202840"></div><div class="a" style="left:552.40px;top:421.40px;width:9.00px;height:7.20px;background:linear-gradient(#f4f4f4,#d05050);border:1px solid #202840;transform:skewX(-12deg)"></div><div class="a" style="left:566.20px;top:420.40px;width:7.20px;height:9.40px;background:#fff;border:1px solid #101830"></div><div class="a" style="left:593.00px;top:422.80px;width:3.40px;height:0.80px;background:#fff"></div><svg class="a" style="left:592.6px;top:426.6px" width="5" height="4"><path d="M0.4 0.6 L4.2 0.6 L2.3 3Z" fill="#fff"/></svg><div class="a" style="left:0.00px;top:432.40px;width:600.00px;height:2.60px;background:linear-gradient(#4a90ee,#2a66da)"></div><div class="a" style="left:0.00px;top:432.40px;width:88.00px;height:2.60px;background:linear-gradient(#7ac08a,#4a9ab0)"></div><div class="t f" style="left:5.30px;top:2.88px;line-height:9px;color:#1a2a60;font-family:'Liberation Serif', serif;font-size:9px;font-weight:bold;letter-spacing:0px;--sx:1.0;--ax:6.8;--al:0.5;font-style:italic;">t</div><div class="t f" style="left:13.20px;top:4.24px;line-height:7.0px;color:#ffffff;font-family:'Liberation Sans', sans-serif;font-size:7.0px;font-weight:bold;letter-spacing:0.9px;transform:scaleX(0.9705);transform-origin:0 50%;--w:141;--ax:13.2;--al:0;text-shadow:0.6px 0.6px 0 #1a3aa0;">Techstream (Ver 11.00.019) - 22170</div><div class="t f" style="left:3.75px;top:16.96px;line-height:8.2px;color:#000;font-family:'Liberation Sans', sans-serif;font-size:8.2px;font-weight:normal;letter-spacing:0px;transform:scaleX(0.5961);transform-origin:0 50%;--w:19.55;--ax:3.75;--al:0;-webkit-text-stroke:0.2px #000;"><span style="display:inline-block;width:32.80px">ファイル</span></div><div class="t f" style="left:32.30px;top:16.96px;line-height:8.2px;color:#000;font-family:'Liberation Sans', sans-serif;font-size:8.2px;font-weight:normal;letter-spacing:0px;transform:scaleX(0.7992);transform-origin:0 50%;--w:13.100000000000001;--ax:32.3;--al:0;-webkit-text-stroke:0.2px #000;"><span style="display:inline-block;width:16.40px">機能</span></div><div class="t f" style="left:53.75px;top:16.96px;line-height:8.2px;color:#000;font-family:'Liberation Sans', sans-serif;font-size:8.2px;font-weight:normal;letter-spacing:0px;transform:scaleX(0.8511);transform-origin:0 50%;--w:13.950000000000003;--ax:53.75;--al:0;-webkit-text-stroke:0.2px #000;"><span style="display:inline-block;width:16.40px">設定</span></div><div class="t f" style="left:76.70px;top:16.96px;line-height:8.2px;color:#000;font-family:'Liberation Sans', sans-serif;font-size:8.2px;font-weight:normal;letter-spacing:0px;transform:scaleX(0.7278);transform-origin:0 50%;--w:35.8;--ax:76.7;--al:0;-webkit-text-stroke:0.2px #000;"><span style="display:inline-block;width:49.20px">サービス情報</span></div><div class="t f" style="left:120.80px;top:16.96px;line-height:8.2px;color:#000;font-family:'Liberation Sans', sans-serif;font-size:8.2px;font-weight:normal;letter-spacing:0px;transform:scaleX(0.7074);transform-origin:0 50%;--w:23.200000000000003;--ax:120.8;--al:0;-webkit-text-stroke:0.2px #000;"><span style="display:inline-block;width:32.80px">ユーザー</span></div><div class="t f" style="left:151.70px;top:16.96px;line-height:8.2px;color:#000;font-family:'Liberation Sans', sans-serif;font-size:8.2px;font-weight:normal;letter-spacing:0px;transform:scaleX(0.6750);transform-origin:0 50%;--w:16.600000000000023;--ax:151.7;--al:0;-webkit-text-stroke:0.2px #000;"><span style="display:inline-block;width:24.60px">ヘルプ</span></div><div class="t f" style="left:30.75px;top:31.16px;line-height:8px;color:#000;font-family:'Liberation Sans', sans-serif;font-size:8px;font-weight:bold;letter-spacing:0px;--sx:1.0;--ax:38.75;--al:0.5;"><span style="display:inline-block;width:16.00px">項目</span></div><div class="t f" style="left:90.40px;top:31.16px;line-height:8px;color:#000;font-family:'Liberation Sans', sans-serif;font-size:8px;font-weight:bold;letter-spacing:0px;--sx:1.0;--ax:94.4;--al:0.5;"><span style="display:inline-block;width:8.00px">値</span></div><div class="t f" style="left:122.35px;top:31.16px;line-height:8px;color:#000;font-family:'Liberation Sans', sans-serif;font-size:8px;font-weight:bold;letter-spacing:0px;--sx:1.0;--ax:130.35;--al:0.5;"><span style="display:inline-block;width:16.00px">単位</span></div><div class="t" style="left:5.40px;top:40.03px;line-height:8px;color:#23236e;font-family:'Liberation Sans', sans-serif;font-size:8px;font-weight:normal;letter-spacing:0px;width:67.90px;overflow:hidden;-webkit-text-stroke:0.1px #23236e;"><span style="display:inline-block;width:20.00px"><span style="display:inline-block;transform:scale(0.500,1.15);transform-origin:0 85%">エンシ゛ン</span></span><span style="display:inline-block;width:24.00px">回転数</span></div><div class="t f" style="left:85.72px;top:40.23px;line-height:7.8px;color:#23236e;font-family:'Liberation Sans', sans-serif;font-size:7.8px;font-weight:normal;letter-spacing:0px;transform:scaleX(0.9000);transform-origin:50% 50%;--sx:0.9;--ax:94.4;--al:0.5;-webkit-text-stroke:0.1px #23236e;">1378</div><div class="t f" style="left:122.88px;top:40.23px;line-height:7.8px;color:#23236e;font-family:'Liberation Sans', sans-serif;font-size:7.8px;font-weight:normal;letter-spacing:0.5px;transform:scaleX(0.9200);transform-origin:50% 50%;--sx:0.92;--ax:130.35;--al:0.5;-webkit-text-stroke:0.1px #23236e;">rpm</div><div class="t" style="left:5.40px;top:48.77px;line-height:8px;color:#b85a3e;font-family:'Liberation Sans', sans-serif;font-size:8px;font-weight:normal;letter-spacing:0px;width:67.90px;overflow:hidden;-webkit-text-stroke:0.1px #b85a3e;"><span style="display:inline-block;width:20.00px"><span style="display:inline-block;transform:scale(0.500,1.15);transform-origin:0 85%">エンシ゛ン</span></span><span style="display:inline-block;width:24.00px">負荷値</span></div><div class="t f" style="left:86.81px;top:48.97px;line-height:7.8px;color:#b85a3e;font-family:'Liberation Sans', sans-serif;font-size:7.8px;font-weight:normal;letter-spacing:0px;transform:scaleX(0.9000);transform-origin:50% 50%;--sx:0.9;--ax:94.4;--al:0.5;-webkit-text-stroke:0.1px #b85a3e;">93.7</div><div class="t f" style="left:126.63px;top:48.97px;line-height:7.8px;color:#b85a3e;font-family:'Liberation Sans', sans-serif;font-size:7.8px;font-weight:normal;letter-spacing:0.5px;transform:scaleX(0.9200);transform-origin:50% 50%;--sx:0.92;--ax:130.35;--al:0.5;-webkit-text-stroke:0.1px #b85a3e;">%</div><div class="t" style="left:5.40px;top:57.51px;line-height:8px;color:#349834;font-family:'Liberation Sans', sans-serif;font-size:8px;font-weight:normal;letter-spacing:0px;width:67.90px;overflow:hidden;-webkit-text-stroke:0.1px #349834;"><span style="display:inline-block;width:40.00px">絶対負荷値</span></div><div class="t f" style="left:86.81px;top:57.71px;line-height:7.8px;color:#349834;font-family:'Liberation Sans', sans-serif;font-size:7.8px;font-weight:normal;letter-spacing:0px;transform:scaleX(0.9000);transform-origin:50% 50%;--sx:0.9;--ax:94.4;--al:0.5;-webkit-text-stroke:0.1px #349834;">45.0</div><div class="t f" style="left:126.63px;top:57.71px;line-height:7.8px;color:#349834;font-family:'Liberation Sans', sans-serif;font-size:7.8px;font-weight:normal;letter-spacing:0.5px;transform:scaleX(0.9200);transform-origin:50% 50%;--sx:0.92;--ax:130.35;--al:0.5;-webkit-text-stroke:0.1px #349834;">%</div><div class="t" style="left:5.40px;top:66.25px;line-height:8px;color:#000;font-family:'Liberation Sans', sans-serif;font-size:8px;font-weight:normal;letter-spacing:0px;width:67.90px;overflow:hidden;-webkit-text-stroke:0.1px #000;"><span style="display:inline-block;width:16.00px">車速</span></div><div class="t f" style="left:90.06px;top:66.45px;line-height:7.8px;color:#000;font-family:'Liberation Sans', sans-serif;font-size:7.8px;font-weight:normal;letter-spacing:0px;transform:scaleX(0.9000);transform-origin:50% 50%;--sx:0.9;--ax:94.4;--al:0.5;-webkit-text-stroke:0.1px #000;">30</div><div class="t f" style="left:120.90px;top:66.45px;line-height:7.8px;color:#000;font-family:'Liberation Sans', sans-serif;font-size:7.8px;font-weight:normal;letter-spacing:0.5px;transform:scaleX(0.9200);transform-origin:50% 50%;--sx:0.92;--ax:130.35;--al:0.5;-webkit-text-stroke:0.1px #000;">km/h</div><div class="t" style="left:5.40px;top:74.99px;line-height:8px;color:#000;font-family:'Liberation Sans', sans-serif;font-size:8px;font-weight:normal;letter-spacing:0px;width:67.90px;overflow:hidden;-webkit-text-stroke:0.1px #000;"><span style="display:inline-block;width:40.00px">吸入空気量</span></div><div class="t f" style="left:86.81px;top:75.19px;line-height:7.8px;color:#000;font-family:'Liberation Sans', sans-serif;font-size:7.8px;font-weight:normal;letter-spacing:0px;transform:scaleX(0.9000);transform-origin:50% 50%;--sx:0.9;--ax:94.4;--al:0.5;-webkit-text-stroke:0.1px #000;">9.21</div><div class="t f" style="left:116.28px;top:75.19px;line-height:7.8px;color:#000;font-family:'Liberation Sans', sans-serif;font-size:7.8px;font-weight:normal;letter-spacing:0.5px;transform:scaleX(0.9200);transform-origin:50% 50%;--sx:0.92;--ax:130.35;--al:0.5;-webkit-text-stroke:0.1px #000;">gm/sec</div><div class="t" style="left:5.40px;top:83.73px;line-height:8px;color:#000;font-family:'Liberation Sans', sans-serif;font-size:8px;font-weight:normal;letter-spacing:0px;width:67.90px;overflow:hidden;-webkit-text-stroke:0.1px #000;"><span style="display:inline-block;width:24.00px">大気圧</span></div><div class="t f" style="left:90.06px;top:83.93px;line-height:7.8px;color:#000;font-family:'Liberation Sans', sans-serif;font-size:7.8px;font-weight:normal;letter-spacing:0px;transform:scaleX(0.9000);transform-origin:50% 50%;--sx:0.9;--ax:94.4;--al:0.5;-webkit-text-stroke:0.1px #000;">99</div><div class="t f" style="left:122.88px;top:83.93px;line-height:7.8px;color:#000;font-family:'Liberation Sans', sans-serif;font-size:7.8px;font-weight:normal;letter-spacing:0.5px;transform:scaleX(0.9200);transform-origin:50% 50%;--sx:0.92;--ax:130.35;--al:0.5;-webkit-text-stroke:0.1px #000;">kPa</div><div class="t" style="left:5.40px;top:92.47px;line-height:8px;color:#000;font-family:'Liberation Sans', sans-serif;font-size:8px;font-weight:normal;letter-spacing:0px;width:67.90px;overflow:hidden;-webkit-text-stroke:0.1px #000;"><span style="display:inline-block;width:48.00px"><span style="display:inline-block;transform:scale(0.500,1.15);transform-origin:0 85%">インテークマニホールト゛</span></span><span style="display:inline-block;width:8.00px">圧</span></div><div class="t f" style="left:90.06px;top:92.67px;line-height:7.8px;color:#000;font-family:'Liberation Sans', sans-serif;font-size:7.8px;font-weight:normal;letter-spacing:0px;transform:scaleX(0.9000);transform-origin:50% 50%;--sx:0.9;--ax:94.4;--al:0.5;-webkit-text-stroke:0.1px #000;">94</div><div class="t f" style="left:122.88px;top:92.67px;line-height:7.8px;color:#000;font-family:'Liberation Sans', sans-serif;font-size:7.8px;font-weight:normal;letter-spacing:0.5px;transform:scaleX(0.9200);transform-origin:50% 50%;--sx:0.92;--ax:130.35;--al:0.5;-webkit-text-stroke:0.1px #000;">kPa</div><div class="t" style="left:5.40px;top:101.21px;line-height:8px;color:#000;font-family:'Liberation Sans', sans-serif;font-size:8px;font-weight:normal;letter-spacing:0px;width:67.90px;overflow:hidden;-webkit-text-stroke:0.1px #000;"><span style="display:inline-block;width:20.00px"><span style="display:inline-block;transform:scale(0.500,1.15);transform-origin:0 85%">エンシ゛ン</span></span><span style="display:inline-block;width:32.00px">冷却水温</span></div><div class="t f" style="left:90.06px;top:101.41px;line-height:7.8px;color:#000;font-family:'Liberation Sans', sans-serif;font-size:7.8px;font-weight:normal;letter-spacing:0px;transform:scaleX(0.9000);transform-origin:50% 50%;--sx:0.9;--ax:94.4;--al:0.5;-webkit-text-stroke:0.1px #000;">88</div><div class="t f" style="left:126.10px;top:101.41px;line-height:7.8px;color:#000;font-family:'Liberation Sans', sans-serif;font-size:7.8px;font-weight:normal;letter-spacing:0.5px;transform:scaleX(0.9200);transform-origin:50% 50%;--sx:0.92;--ax:130.35;--al:0.5;-webkit-text-stroke:0.1px #000;">℃</div><div class="t" style="left:5.40px;top:109.95px;line-height:8px;color:#000;font-family:'Liberation Sans', sans-serif;font-size:8px;font-weight:normal;letter-spacing:0px;width:67.90px;overflow:hidden;-webkit-text-stroke:0.1px #000;"><span style="display:inline-block;width:48.00px">吸入空気温度</span></div><div class="t f" style="left:90.06px;top:110.15px;line-height:7.8px;color:#000;font-family:'Liberation Sans', sans-serif;font-size:7.8px;font-weight:normal;letter-spacing:0px;transform:scaleX(0.9000);transform-origin:50% 50%;--sx:0.9;--ax:94.4;--al:0.5;-webkit-text-stroke:0.1px #000;">32</div><div class="t f" style="left:126.10px;top:110.15px;line-height:7.8px;color:#000;font-family:'Liberation Sans', sans-serif;font-size:7.8px;font-weight:normal;letter-spacing:0.5px;transform:scaleX(0.9200);transform-origin:50% 50%;--sx:0.92;--ax:130.35;--al:0.5;-webkit-text-stroke:0.1px #000;">℃</div><div class="t" style="left:5.40px;top:118.69px;line-height:8px;color:#000;font-family:'Liberation Sans', sans-serif;font-size:8px;font-weight:normal;letter-spacing:0px;width:67.90px;overflow:hidden;-webkit-text-stroke:0.1px #000;"><span style="display:inline-block;width:20.00px"><span style="display:inline-block;transform:scale(0.500,1.15);transform-origin:0 85%">エンシ゛ン</span></span><span style="display:inline-block;width:56.00px">始動後経過時間</span></div><div class="t f" style="left:85.72px;top:118.89px;line-height:7.8px;color:#000;font-family:'Liberation Sans', sans-serif;font-size:7.8px;font-weight:normal;letter-spacing:0px;transform:scaleX(0.9000);transform-origin:50% 50%;--sx:0.9;--ax:94.4;--al:0.5;-webkit-text-stroke:0.1px #000;">5516</div><div class="t f" style="left:128.15px;top:118.89px;line-height:7.8px;color:#000;font-family:'Liberation Sans', sans-serif;font-size:7.8px;font-weight:normal;letter-spacing:0.5px;transform:scaleX(0.9200);transform-origin:50% 50%;--sx:0.92;--ax:130.35;--al:0.5;-webkit-text-stroke:0.1px #000;">s</div><div class="t" style="left:5.40px;top:127.43px;line-height:8px;color:#000;font-family:'Liberation Sans', sans-serif;font-size:8px;font-weight:normal;letter-spacing:0px;width:67.90px;overflow:hidden;-webkit-text-stroke:0.1px #000;"><span style="display:inline-block;width:40.00px">始動時水温</span></div><div class="t f" style="left:86.81px;top:127.63px;line-height:7.8px;color:#000;font-family:'Liberation Sans', sans-serif;font-size:7.8px;font-weight:normal;letter-spacing:0px;transform:scaleX(0.9000);transform-origin:50% 50%;--sx:0.9;--ax:94.4;--al:0.5;-webkit-text-stroke:0.1px #000;">35.0</div><div class="t f" style="left:126.10px;top:127.63px;line-height:7.8px;color:#000;font-family:'Liberation Sans', sans-serif;font-size:7.8px;font-weight:normal;letter-spacing:0.5px;transform:scaleX(0.9200);transform-origin:50% 50%;--sx:0.92;--ax:130.35;--al:0.5;-webkit-text-stroke:0.1px #000;">℃</div><div class="t" style="left:5.40px;top:136.17px;line-height:8px;color:#000;font-family:'Liberation Sans', sans-serif;font-size:8px;font-weight:normal;letter-spacing:0px;width:67.90px;overflow:hidden;-webkit-text-stroke:0.1px #000;"><span style="display:inline-block;width:48.00px">始動時吸気温</span></div><div class="t f" style="left:86.81px;top:136.37px;line-height:7.8px;color:#000;font-family:'Liberation Sans', sans-serif;font-size:7.8px;font-weight:normal;letter-spacing:0px;transform:scaleX(0.9000);transform-origin:50% 50%;--sx:0.9;--ax:94.4;--al:0.5;-webkit-text-stroke:0.1px #000;">36.8</div><div class="t f" style="left:126.10px;top:136.37px;line-height:7.8px;color:#000;font-family:'Liberation Sans', sans-serif;font-size:7.8px;font-weight:normal;letter-spacing:0.5px;transform:scaleX(0.9200);transform-origin:50% 50%;--sx:0.92;--ax:130.35;--al:0.5;-webkit-text-stroke:0.1px #000;">℃</div><div class="t" style="left:5.40px;top:144.91px;line-height:8px;color:#000;font-family:'Liberation Sans', sans-serif;font-size:8px;font-weight:normal;letter-spacing:0px;width:67.90px;overflow:hidden;-webkit-text-stroke:0.1px #000;"><span style="display:inline-block;width:16.00px">補機</span><span style="display:inline-block;width:20.00px"><span style="display:inline-block;transform:scale(0.500,1.15);transform-origin:0 85%">ハ゛ッテリ</span></span><span style="display:inline-block;width:16.00px">電圧</span></div><div class="t f" style="left:82.47px;top:145.11px;line-height:7.8px;color:#000;font-family:'Liberation Sans', sans-serif;font-size:7.8px;font-weight:normal;letter-spacing:0px;transform:scaleX(0.9000);transform-origin:50% 50%;--sx:0.9;--ax:94.4;--al:0.5;-webkit-text-stroke:0.1px #000;">14.179</div><div class="t f" style="left:127.50px;top:145.11px;line-height:7.8px;color:#000;font-family:'Liberation Sans', sans-serif;font-size:7.8px;font-weight:normal;letter-spacing:0.5px;transform:scaleX(0.9200);transform-origin:50% 50%;--sx:0.92;--ax:130.35;--al:0.5;-webkit-text-stroke:0.1px #000;">V</div><div class="t" style="left:5.40px;top:153.65px;line-height:8px;color:#000;font-family:'Liberation Sans', sans-serif;font-size:8px;font-weight:normal;letter-spacing:0px;width:67.90px;overflow:hidden;-webkit-text-stroke:0.1px #000;"><span style="display:inline-block;width:32.00px"><span style="display:inline-block;transform:scale(0.500,1.15);transform-origin:0 85%">スロットルセンサ</span></span><span style="display:inline-block;width:16.00px;font-family:'Liberation Mono',monospace"><span style="display:inline-block;transform:scaleX(0.833);transform-origin:0 0">No.1</span></span><span style="display:inline-block;width:24.00px">電圧比</span></div><div class="t f" style="left:86.81px;top:153.85px;line-height:7.8px;color:#000;font-family:'Liberation Sans', sans-serif;font-size:7.8px;font-weight:normal;letter-spacing:0px;transform:scaleX(0.9000);transform-origin:50% 50%;--sx:0.9;--ax:94.4;--al:0.5;-webkit-text-stroke:0.1px #000;">26.6</div><div class="t f" style="left:126.63px;top:153.85px;line-height:7.8px;color:#000;font-family:'Liberation Sans', sans-serif;font-size:7.8px;font-weight:normal;letter-spacing:0.5px;transform:scaleX(0.9200);transform-origin:50% 50%;--sx:0.92;--ax:130.35;--al:0.5;-webkit-text-stroke:0.1px #000;">%</div><div class="t" style="left:5.40px;top:162.39px;line-height:8px;color:#000;font-family:'Liberation Sans', sans-serif;font-size:8px;font-weight:normal;letter-spacing:0px;width:67.90px;overflow:hidden;-webkit-text-stroke:0.1px #000;"><span style="display:inline-block;width:32.00px"><span style="display:inline-block;transform:scale(0.500,1.15);transform-origin:0 85%">スロットルセンサ</span></span><span style="display:inline-block;width:16.00px;font-family:'Liberation Mono',monospace"><span style="display:inline-block;transform:scaleX(0.833);transform-origin:0 0">No.2</span></span><span style="display:inline-block;width:24.00px">電圧比</span></div><div class="t f" style="left:86.81px;top:162.59px;line-height:7.8px;color:#000;font-family:'Liberation Sans', sans-serif;font-size:7.8px;font-weight:normal;letter-spacing:0px;transform:scaleX(0.9000);transform-origin:50% 50%;--sx:0.9;--ax:94.4;--al:0.5;-webkit-text-stroke:0.1px #000;">61.1</div><div class="t f" style="left:126.63px;top:162.59px;line-height:7.8px;color:#000;font-family:'Liberation Sans', sans-serif;font-size:7.8px;font-weight:normal;letter-spacing:0.5px;transform:scaleX(0.9200);transform-origin:50% 50%;--sx:0.92;--ax:130.35;--al:0.5;-webkit-text-stroke:0.1px #000;">%</div><div class="t" style="left:5.40px;top:171.13px;line-height:8px;color:#000;font-family:'Liberation Sans', sans-serif;font-size:8px;font-weight:normal;letter-spacing:0px;width:67.90px;overflow:hidden;-webkit-text-stroke:0.1px #000;"><span style="display:inline-block;width:32.00px"><span style="display:inline-block;transform:scale(0.500,1.15);transform-origin:0 85%">スロットルセンサ</span></span><span style="display:inline-block;width:32.00px">全閉状態</span></div><div class="t f" style="left:86.60px;top:171.33px;line-height:7.8px;color:#000;font-family:'Liberation Sans', sans-serif;font-size:7.8px;font-weight:normal;letter-spacing:0px;transform:scaleX(0.9000);transform-origin:50% 50%;--sx:0.9;--ax:94.4;--al:0.5;-webkit-text-stroke:0.1px #000;">OFF</div><div class="t" style="left:5.40px;top:179.87px;line-height:8px;color:#000;font-family:'Liberation Sans', sans-serif;font-size:8px;font-weight:normal;letter-spacing:0px;width:67.90px;overflow:hidden;-webkit-text-stroke:0.1px #000;"><span style="display:inline-block;width:20.00px"><span style="display:inline-block;transform:scale(0.500,1.15);transform-origin:0 85%">スロットル</span></span><span style="display:inline-block;width:32.00px">要求開度</span></div><div class="t f" style="left:84.64px;top:180.07px;line-height:7.8px;color:#000;font-family:'Liberation Sans', sans-serif;font-size:7.8px;font-weight:normal;letter-spacing:0px;transform:scaleX(0.9000);transform-origin:50% 50%;--sx:0.9;--ax:94.4;--al:0.5;-webkit-text-stroke:0.1px #000;">1.328</div><div class="t f" style="left:127.50px;top:180.07px;line-height:7.8px;color:#000;font-family:'Liberation Sans', sans-serif;font-size:7.8px;font-weight:normal;letter-spacing:0.5px;transform:scaleX(0.9200);transform-origin:50% 50%;--sx:0.92;--ax:130.35;--al:0.5;-webkit-text-stroke:0.1px #000;">V</div><div class="t" style="left:5.40px;top:188.64px;line-height:8.6px;color:#000;font-family:'Liberation Sans', sans-serif;font-size:8px;font-weight:normal;letter-spacing:0px;width:67.90px;overflow:hidden;-webkit-text-stroke:0.1px #000;"><span style="display:inline-block;width:20.00px"><span style="display:inline-block;transform:scale(0.500,1.15);transform-origin:0 85%">スロットル</span></span><span style="display:inline-block;width:16.00px">開度</span><span style="display:inline-block;width:16.00px;font-family:'Liberation Mono',monospace"><span style="display:inline-block;transform:scaleX(0.833);transform-origin:0 0">(ECU</span></span><span style="display:inline-block;width:16.00px">認識</span><br><span style="display:inline-block;width:8.00px">値</span><span style="display:inline-block;width:4.00px;font-family:'Liberation Mono',monospace"><span style="display:inline-block;transform:scaleX(0.833);transform-origin:0 0">)</span></span></div><div class="t f" style="left:86.81px;top:193.18px;line-height:7.8px;color:#000;font-family:'Liberation Sans', sans-serif;font-size:7.8px;font-weight:normal;letter-spacing:0px;transform:scaleX(0.9000);transform-origin:50% 50%;--sx:0.9;--ax:94.4;--al:0.5;-webkit-text-stroke:0.1px #000;">12.5</div><div class="t f" style="left:126.63px;top:193.18px;line-height:7.8px;color:#000;font-family:'Liberation Sans', sans-serif;font-size:7.8px;font-weight:normal;letter-spacing:0.5px;transform:scaleX(0.9200);transform-origin:50% 50%;--sx:0.92;--ax:130.35;--al:0.5;-webkit-text-stroke:0.1px #000;">%</div><div class="t" style="left:5.40px;top:206.09px;line-height:8px;color:#000;font-family:'Liberation Sans', sans-serif;font-size:8px;font-weight:normal;letter-spacing:0px;width:67.90px;overflow:hidden;-webkit-text-stroke:0.1px #000;"><span style="display:inline-block;width:32.00px"><span style="display:inline-block;transform:scale(0.500,1.15);transform-origin:0 85%">スロットルセンサ</span></span><span style="display:inline-block;width:16.00px;font-family:'Liberation Mono',monospace"><span style="display:inline-block;transform:scaleX(0.833);transform-origin:0 0">No.1</span></span><span style="display:inline-block;width:16.00px">電圧</span></div><div class="t f" style="left:84.64px;top:206.29px;line-height:7.8px;color:#000;font-family:'Liberation Sans', sans-serif;font-size:7.8px;font-weight:normal;letter-spacing:0px;transform:scaleX(0.9000);transform-origin:50% 50%;--sx:0.9;--ax:94.4;--al:0.5;-webkit-text-stroke:0.1px #000;">1.308</div><div class="t f" style="left:127.50px;top:206.29px;line-height:7.8px;color:#000;font-family:'Liberation Sans', sans-serif;font-size:7.8px;font-weight:normal;letter-spacing:0.5px;transform:scaleX(0.9200);transform-origin:50% 50%;--sx:0.92;--ax:130.35;--al:0.5;-webkit-text-stroke:0.1px #000;">V</div><div class="t" style="left:5.40px;top:214.83px;line-height:8px;color:#000;font-family:'Liberation Sans', sans-serif;font-size:8px;font-weight:normal;letter-spacing:0px;width:67.90px;overflow:hidden;-webkit-text-stroke:0.1px #000;"><span style="display:inline-block;width:32.00px"><span style="display:inline-block;transform:scale(0.500,1.15);transform-origin:0 85%">スロットルセンサ</span></span><span style="display:inline-block;width:16.00px;font-family:'Liberation Mono',monospace"><span style="display:inline-block;transform:scaleX(0.833);transform-origin:0 0">No.2</span></span><span style="display:inline-block;width:16.00px">電圧</span></div><div class="t f" style="left:84.64px;top:215.03px;line-height:7.8px;color:#000;font-family:'Liberation Sans', sans-serif;font-size:7.8px;font-weight:normal;letter-spacing:0px;transform:scaleX(0.9000);transform-origin:50% 50%;--sx:0.9;--ax:94.4;--al:0.5;-webkit-text-stroke:0.1px #000;">3.027</div><div class="t f" style="left:127.50px;top:215.03px;line-height:7.8px;color:#000;font-family:'Liberation Sans', sans-serif;font-size:7.8px;font-weight:normal;letter-spacing:0.5px;transform:scaleX(0.9200);transform-origin:50% 50%;--sx:0.92;--ax:130.35;--al:0.5;-webkit-text-stroke:0.1px #000;">V</div><div class="t" style="left:5.40px;top:223.57px;line-height:8px;color:#000;font-family:'Liberation Sans', sans-serif;font-size:8px;font-weight:normal;letter-spacing:0px;width:67.90px;overflow:hidden;-webkit-text-stroke:0.1px #000;"><span style="display:inline-block;width:20.00px"><span style="display:inline-block;transform:scale(0.500,1.15);transform-origin:0 85%">スロットル</span></span><span style="display:inline-block;width:48.00px">開度指令電圧</span></div><div class="t f" style="left:84.64px;top:223.77px;line-height:7.8px;color:#000;font-family:'Liberation Sans', sans-serif;font-size:7.8px;font-weight:normal;letter-spacing:0px;transform:scaleX(0.9000);transform-origin:50% 50%;--sx:0.9;--ax:94.4;--al:0.5;-webkit-text-stroke:0.1px #000;">1.328</div><div class="t f" style="left:127.50px;top:223.77px;line-height:7.8px;color:#000;font-family:'Liberation Sans', sans-serif;font-size:7.8px;font-weight:normal;letter-spacing:0.5px;transform:scaleX(0.9200);transform-origin:50% 50%;--sx:0.92;--ax:130.35;--al:0.5;-webkit-text-stroke:0.1px #000;">V</div><div class="t" style="left:5.40px;top:232.31px;line-height:8px;color:#000;font-family:'Liberation Sans', sans-serif;font-size:8px;font-weight:normal;letter-spacing:0px;width:67.90px;overflow:hidden;-webkit-text-stroke:0.1px #000;"><span style="display:inline-block;width:32.00px"><span style="display:inline-block;transform:scale(0.500,1.15);transform-origin:0 85%">スロットルモータ</span></span><span style="display:inline-block;width:16.00px">電流</span></div><div class="t f" style="left:88.98px;top:232.51px;line-height:7.8px;color:#000;font-family:'Liberation Sans', sans-serif;font-size:7.8px;font-weight:normal;letter-spacing:0px;transform:scaleX(0.9000);transform-origin:50% 50%;--sx:0.9;--ax:94.4;--al:0.5;-webkit-text-stroke:0.1px #000;">0.8</div><div class="t f" style="left:127.50px;top:232.51px;line-height:7.8px;color:#000;font-family:'Liberation Sans', sans-serif;font-size:7.8px;font-weight:normal;letter-spacing:0.5px;transform:scaleX(0.9200);transform-origin:50% 50%;--sx:0.92;--ax:130.35;--al:0.5;-webkit-text-stroke:0.1px #000;">A</div><div class="t" style="left:5.40px;top:241.05px;line-height:8px;color:#000;font-family:'Liberation Sans', sans-serif;font-size:8px;font-weight:normal;letter-spacing:0px;width:67.90px;overflow:hidden;-webkit-text-stroke:0.1px #000;"><span style="display:inline-block;width:32.00px"><span style="display:inline-block;transform:scale(0.500,1.15);transform-origin:0 85%">スロットルモータ</span></span><span style="display:inline-block;width:16.00px">出力</span></div><div class="t f" style="left:86.81px;top:241.25px;line-height:7.8px;color:#000;font-family:'Liberation Sans', sans-serif;font-size:7.8px;font-weight:normal;letter-spacing:0px;transform:scaleX(0.9000);transform-origin:50% 50%;--sx:0.9;--ax:94.4;--al:0.5;-webkit-text-stroke:0.1px #000;">26.6</div><div class="t f" style="left:126.63px;top:241.25px;line-height:7.8px;color:#000;font-family:'Liberation Sans', sans-serif;font-size:7.8px;font-weight:normal;letter-spacing:0.5px;transform:scaleX(0.9200);transform-origin:50% 50%;--sx:0.92;--ax:130.35;--al:0.5;-webkit-text-stroke:0.1px #000;">%</div><div class="t" style="left:5.40px;top:249.79px;line-height:8px;color:#000;font-family:'Liberation Sans', sans-serif;font-size:8px;font-weight:normal;letter-spacing:0px;width:67.90px;overflow:hidden;-webkit-text-stroke:0.1px #000;"><span style="display:inline-block;width:32.00px"><span style="display:inline-block;transform:scale(0.500,1.15);transform-origin:0 85%">スロットルモータ</span></span><span style="display:inline-block;width:16.00px">開側</span><span style="display:inline-block;width:16.00px;font-family:'Liberation Mono',monospace"><span style="display:inline-block;transform:scaleX(0.833);transform-origin:0 0">Duty</span></span><span style="display:inline-block;width:8.00px">比</span></div><div class="t f" style="left:90.06px;top:249.99px;line-height:7.8px;color:#000;font-family:'Liberation Sans', sans-serif;font-size:7.8px;font-weight:normal;letter-spacing:0px;transform:scaleX(0.9000);transform-origin:50% 50%;--sx:0.9;--ax:94.4;--al:0.5;-webkit-text-stroke:0.1px #000;">14</div><div class="t f" style="left:126.63px;top:249.99px;line-height:7.8px;color:#000;font-family:'Liberation Sans', sans-serif;font-size:7.8px;font-weight:normal;letter-spacing:0.5px;transform:scaleX(0.9200);transform-origin:50% 50%;--sx:0.92;--ax:130.35;--al:0.5;-webkit-text-stroke:0.1px #000;">%</div><div class="t" style="left:5.40px;top:258.53px;line-height:8px;color:#000;font-family:'Liberation Sans', sans-serif;font-size:8px;font-weight:normal;letter-spacing:0px;width:67.90px;overflow:hidden;-webkit-text-stroke:0.1px #000;"><span style="display:inline-block;width:32.00px"><span style="display:inline-block;transform:scale(0.500,1.15);transform-origin:0 85%">スロットルモータ</span></span><span style="display:inline-block;width:16.00px">閉側</span><span style="display:inline-block;width:16.00px;font-family:'Liberation Mono',monospace"><span style="display:inline-block;transform:scaleX(0.833);transform-origin:0 0">Duty</span></span><span style="display:inline-block;width:8.00px">比</span></div><div class="t f" style="left:92.23px;top:258.73px;line-height:7.8px;color:#000;font-family:'Liberation Sans', sans-serif;font-size:7.8px;font-weight:normal;letter-spacing:0px;transform:scaleX(0.9000);transform-origin:50% 50%;--sx:0.9;--ax:94.4;--al:0.5;-webkit-text-stroke:0.1px #000;">0</div><div class="t f" style="left:126.63px;top:258.73px;line-height:7.8px;color:#000;font-family:'Liberation Sans', sans-serif;font-size:7.8px;font-weight:normal;letter-spacing:0.5px;transform:scaleX(0.9200);transform-origin:50% 50%;--sx:0.92;--ax:130.35;--al:0.5;-webkit-text-stroke:0.1px #000;">%</div><div class="t" style="left:5.40px;top:267.27px;line-height:8px;color:#000;font-family:'Liberation Sans', sans-serif;font-size:8px;font-weight:normal;letter-spacing:0px;width:67.90px;overflow:hidden;-webkit-text-stroke:0.1px #000;"><span style="display:inline-block;width:20.00px"><span style="display:inline-block;transform:scale(0.500,1.15);transform-origin:0 85%">スロットル</span></span><span style="display:inline-block;width:40.00px">全閉学習値</span></div><div class="t f" style="left:84.64px;top:267.47px;line-height:7.8px;color:#000;font-family:'Liberation Sans', sans-serif;font-size:7.8px;font-weight:normal;letter-spacing:0px;transform:scaleX(0.9000);transform-origin:50% 50%;--sx:0.9;--ax:94.4;--al:0.5;-webkit-text-stroke:0.1px #000;">0.625</div><div class="t f" style="left:127.50px;top:267.47px;line-height:7.8px;color:#000;font-family:'Liberation Sans', sans-serif;font-size:7.8px;font-weight:normal;letter-spacing:0.5px;transform:scaleX(0.9200);transform-origin:50% 50%;--sx:0.92;--ax:130.35;--al:0.5;-webkit-text-stroke:0.1px #000;">V</div><div class="t" style="left:5.40px;top:276.01px;line-height:8px;color:#000;font-family:'Liberation Sans', sans-serif;font-size:8px;font-weight:normal;letter-spacing:0px;width:67.90px;overflow:hidden;-webkit-text-stroke:0.1px #000;"><span style="display:inline-block;width:20.00px"><span style="display:inline-block;transform:scale(0.500,1.15);transform-origin:0 85%">スロットル</span></span><span style="display:inline-block;width:16.00px">開度</span></div><div class="t f" style="left:84.64px;top:276.21px;line-height:7.8px;color:#000;font-family:'Liberation Sans', sans-serif;font-size:7.8px;font-weight:normal;letter-spacing:0px;transform:scaleX(0.9000);transform-origin:50% 50%;--sx:0.9;--ax:94.4;--al:0.5;-webkit-text-stroke:0.1px #000;">13.17</div><div class="t f" style="left:128.54px;top:276.21px;line-height:7.8px;color:#000;font-family:'Liberation Sans', sans-serif;font-size:7.8px;font-weight:normal;letter-spacing:0.5px;transform:scaleX(0.9200);transform-origin:50% 50%;--sx:0.92;--ax:130.35;--al:0.5;-webkit-text-stroke:0.1px #000;">°</div><div class="t" style="left:5.40px;top:284.75px;line-height:8px;color:#000;font-family:'Liberation Sans', sans-serif;font-size:8px;font-weight:normal;letter-spacing:0px;width:67.90px;overflow:hidden;-webkit-text-stroke:0.1px #000;"><span style="display:inline-block;width:12.00px;font-family:'Liberation Mono',monospace"><span style="display:inline-block;transform:scaleX(0.833);transform-origin:0 0">ISC</span></span><span style="display:inline-block;width:16.00px">流量</span></div><div class="t f" style="left:86.81px;top:284.95px;line-height:7.8px;color:#000;font-family:'Liberation Sans', sans-serif;font-size:7.8px;font-weight:normal;letter-spacing:0px;transform:scaleX(0.9000);transform-origin:50% 50%;--sx:0.9;--ax:94.4;--al:0.5;-webkit-text-stroke:0.1px #000;">1.74</div><div class="t f" style="left:124.40px;top:284.95px;line-height:7.8px;color:#000;font-family:'Liberation Sans', sans-serif;font-size:7.8px;font-weight:normal;letter-spacing:0.5px;transform:scaleX(0.9200);transform-origin:50% 50%;--sx:0.92;--ax:130.35;--al:0.5;-webkit-text-stroke:0.1px #000;">L/s</div><div class="t" style="left:5.40px;top:293.49px;line-height:8px;color:#000;font-family:'Liberation Sans', sans-serif;font-size:8px;font-weight:normal;letter-spacing:0px;width:67.90px;overflow:hidden;-webkit-text-stroke:0.1px #000;"><span style="display:inline-block;width:12.00px;font-family:'Liberation Mono',monospace"><span style="display:inline-block;transform:scaleX(0.833);transform-origin:0 0">ISC</span></span><span style="display:inline-block;width:16.00px">開度</span></div><div class="t f" style="left:86.81px;top:293.69px;line-height:7.8px;color:#000;font-family:'Liberation Sans', sans-serif;font-size:7.8px;font-weight:normal;letter-spacing:0px;transform:scaleX(0.9000);transform-origin:50% 50%;--sx:0.9;--ax:94.4;--al:0.5;-webkit-text-stroke:0.1px #000;">3.94</div><div class="t f" style="left:128.54px;top:293.69px;line-height:7.8px;color:#000;font-family:'Liberation Sans', sans-serif;font-size:7.8px;font-weight:normal;letter-spacing:0.5px;transform:scaleX(0.9200);transform-origin:50% 50%;--sx:0.92;--ax:130.35;--al:0.5;-webkit-text-stroke:0.1px #000;">°</div><div class="t" style="left:5.40px;top:302.23px;line-height:8px;color:#000;font-family:'Liberation Sans', sans-serif;font-size:8px;font-weight:normal;letter-spacing:0px;width:67.90px;overflow:hidden;-webkit-text-stroke:0.1px #000;"><span style="display:inline-block;width:12.00px;font-family:'Liberation Mono',monospace"><span style="display:inline-block;transform:scaleX(0.833);transform-origin:0 0">ISC</span></span><span style="display:inline-block;width:36.00px"><span style="display:inline-block;transform:scale(0.500,1.15);transform-origin:0 85%">フィート゛ハ゛ック</span></span><span style="display:inline-block;width:8.00px">量</span></div><div class="t f" style="left:86.81px;top:302.43px;line-height:7.8px;color:#000;font-family:'Liberation Sans', sans-serif;font-size:7.8px;font-weight:normal;letter-spacing:0px;transform:scaleX(0.9000);transform-origin:50% 50%;--sx:0.9;--ax:94.4;--al:0.5;-webkit-text-stroke:0.1px #000;">0.01</div><div class="t f" style="left:124.40px;top:302.43px;line-height:7.8px;color:#000;font-family:'Liberation Sans', sans-serif;font-size:7.8px;font-weight:normal;letter-spacing:0.5px;transform:scaleX(0.9200);transform-origin:50% 50%;--sx:0.92;--ax:130.35;--al:0.5;-webkit-text-stroke:0.1px #000;">L/s</div><div class="t" style="left:5.40px;top:310.97px;line-height:8px;color:#000;font-family:'Liberation Sans', sans-serif;font-size:8px;font-weight:normal;letter-spacing:0px;width:67.90px;overflow:hidden;-webkit-text-stroke:0.1px #000;"><span style="display:inline-block;width:12.00px;font-family:'Liberation Mono',monospace"><span style="display:inline-block;transform:scaleX(0.833);transform-origin:0 0">ISC</span></span><span style="display:inline-block;width:40.00px">流量学習値</span></div><div class="t f" style="left:86.81px;top:311.17px;line-height:7.8px;color:#000;font-family:'Liberation Sans', sans-serif;font-size:7.8px;font-weight:normal;letter-spacing:0px;transform:scaleX(0.9000);transform-origin:50% 50%;--sx:0.9;--ax:94.4;--al:0.5;-webkit-text-stroke:0.1px #000;">1.73</div><div class="t f" style="left:124.40px;top:311.17px;line-height:7.8px;color:#000;font-family:'Liberation Sans', sans-serif;font-size:7.8px;font-weight:normal;letter-spacing:0.5px;transform:scaleX(0.9200);transform-origin:50% 50%;--sx:0.92;--ax:130.35;--al:0.5;-webkit-text-stroke:0.1px #000;">L/s</div><div class="t" style="left:5.40px;top:319.71px;line-height:8px;color:#000;font-family:'Liberation Sans', sans-serif;font-size:8px;font-weight:normal;letter-spacing:0px;width:67.90px;overflow:hidden;-webkit-text-stroke:0.1px #000;"><span style="display:inline-block;width:12.00px;font-family:'Liberation Mono',monospace"><span style="display:inline-block;transform:scaleX(0.833);transform-origin:0 0">ISC</span></span><span style="display:inline-block;width:56.00px">電気負荷補正量</span></div><div class="t f" style="left:86.81px;top:319.91px;line-height:7.8px;color:#000;font-family:'Liberation Sans', sans-serif;font-size:7.8px;font-weight:normal;letter-spacing:0px;transform:scaleX(0.9000);transform-origin:50% 50%;--sx:0.9;--ax:94.4;--al:0.5;-webkit-text-stroke:0.1px #000;">0.00</div><div class="t f" style="left:124.40px;top:319.91px;line-height:7.8px;color:#000;font-family:'Liberation Sans', sans-serif;font-size:7.8px;font-weight:normal;letter-spacing:0.5px;transform:scaleX(0.9200);transform-origin:50% 50%;--sx:0.92;--ax:130.35;--al:0.5;-webkit-text-stroke:0.1px #000;">L/s</div><div class="t" style="left:5.40px;top:328.45px;line-height:8px;color:#000;font-family:'Liberation Sans', sans-serif;font-size:8px;font-weight:normal;letter-spacing:0px;width:67.90px;overflow:hidden;-webkit-text-stroke:0.1px #000;"><span style="display:inline-block;width:12.00px;font-family:'Liberation Mono',monospace"><span style="display:inline-block;transform:scaleX(0.833);transform-origin:0 0">ISC</span></span><span style="display:inline-block;width:16.00px"><span style="display:inline-block;transform:scale(0.500,1.15);transform-origin:0 85%">エアコン</span></span><span style="display:inline-block;width:24.00px">補正量</span></div><div class="t f" style="left:86.81px;top:328.65px;line-height:7.8px;color:#000;font-family:'Liberation Sans', sans-serif;font-size:7.8px;font-weight:normal;letter-spacing:0px;transform:scaleX(0.9000);transform-origin:50% 50%;--sx:0.9;--ax:94.4;--al:0.5;-webkit-text-stroke:0.1px #000;">0.00</div><div class="t f" style="left:124.40px;top:328.65px;line-height:7.8px;color:#000;font-family:'Liberation Sans', sans-serif;font-size:7.8px;font-weight:normal;letter-spacing:0.5px;transform:scaleX(0.9200);transform-origin:50% 50%;--sx:0.92;--ax:130.35;--al:0.5;-webkit-text-stroke:0.1px #000;">L/s</div><div class="t" style="left:5.40px;top:337.22px;line-height:8.6px;color:#000;font-family:'Liberation Sans', sans-serif;font-size:8px;font-weight:normal;letter-spacing:0px;width:67.90px;overflow:hidden;-webkit-text-stroke:0.1px #000;"><span style="display:inline-block;width:72.00px">回転低下時制御判定</span><br><span style="display:inline-block;width:16.00px">状態</span></div><div class="t f" style="left:86.60px;top:341.76px;line-height:7.8px;color:#000;font-family:'Liberation Sans', sans-serif;font-size:7.8px;font-weight:normal;letter-spacing:0px;transform:scaleX(0.9000);transform-origin:50% 50%;--sx:0.9;--ax:94.4;--al:0.5;-webkit-text-stroke:0.1px #000;">OFF</div><div class="t" style="left:5.40px;top:354.67px;line-height:8px;color:#000;font-family:'Liberation Sans', sans-serif;font-size:8px;font-weight:normal;letter-spacing:0px;width:67.90px;overflow:hidden;-webkit-text-stroke:0.1px #000;"><span style="display:inline-block;width:32.00px"><span style="display:inline-block;transform:scale(0.500,1.15);transform-origin:0 85%">テ゛ホ゜シ゛ット</span></span><span style="display:inline-block;width:40.00px">損失空気量</span></div><div class="t f" style="left:86.81px;top:354.87px;line-height:7.8px;color:#000;font-family:'Liberation Sans', sans-serif;font-size:7.8px;font-weight:normal;letter-spacing:0px;transform:scaleX(0.9000);transform-origin:50% 50%;--sx:0.9;--ax:94.4;--al:0.5;-webkit-text-stroke:0.1px #000;">0.00</div><div class="t f" style="left:124.40px;top:354.87px;line-height:7.8px;color:#000;font-family:'Liberation Sans', sans-serif;font-size:7.8px;font-weight:normal;letter-spacing:0.5px;transform:scaleX(0.9200);transform-origin:50% 50%;--sx:0.92;--ax:130.35;--al:0.5;-webkit-text-stroke:0.1px #000;">L/s</div><div class="t" style="left:5.40px;top:363.41px;line-height:8px;color:#000;font-family:'Liberation Sans', sans-serif;font-size:8px;font-weight:normal;letter-spacing:0px;width:67.90px;overflow:hidden;-webkit-text-stroke:0.1px #000;"><span style="display:inline-block;width:32.00px">噴射時間</span><span style="display:inline-block;width:16.00px;font-family:'Liberation Mono',monospace"><span style="display:inline-block;transform:scaleX(0.833);transform-origin:0 0"> #1(</span></span><span style="display:inline-block;width:16.00px"><span style="display:inline-block;transform:scale(0.500,1.15);transform-origin:0 85%">ホ゜ート</span></span><span style="display:inline-block;width:4.00px;font-family:'Liberation Mono',monospace"><span style="display:inline-block;transform:scaleX(0.833);transform-origin:0 0">)</span></span></div><div class="t f" style="left:85.72px;top:363.61px;line-height:7.8px;color:#000;font-family:'Liberation Sans', sans-serif;font-size:7.8px;font-weight:normal;letter-spacing:0px;transform:scaleX(0.9000);transform-origin:50% 50%;--sx:0.9;--ax:94.4;--al:0.5;-webkit-text-stroke:0.1px #000;">7604</div><div class="t f" style="left:125.65px;top:363.61px;line-height:7.8px;color:#000;font-family:'Liberation Sans', sans-serif;font-size:7.8px;font-weight:normal;letter-spacing:0.5px;transform:scaleX(0.9200);transform-origin:50% 50%;--sx:0.92;--ax:130.35;--al:0.5;-webkit-text-stroke:0.1px #000;">μs</div><div class="t" style="left:5.40px;top:372.18px;line-height:8.6px;color:#000;font-family:'Liberation Sans', sans-serif;font-size:8px;font-weight:normal;letter-spacing:0px;width:67.90px;overflow:hidden;-webkit-text-stroke:0.1px #000;"><span style="display:inline-block;width:40.00px">燃料消費量</span><span style="display:inline-block;width:8.00px;font-family:'Liberation Mono',monospace"><span style="display:inline-block;transform:scaleX(0.833);transform-origin:0 0">10</span></span><span style="display:inline-block;width:24.00px">回噴射</span><br><span style="display:inline-block;width:8.00px">分</span></div><div class="t f" style="left:84.64px;top:376.72px;line-height:7.8px;color:#000;font-family:'Liberation Sans', sans-serif;font-size:7.8px;font-weight:normal;letter-spacing:0px;transform:scaleX(0.9000);transform-origin:50% 50%;--sx:0.9;--ax:94.4;--al:0.5;-webkit-text-stroke:0.1px #000;">0.209</div><div class="t f" style="left:125.73px;top:376.72px;line-height:7.8px;color:#000;font-family:'Liberation Sans', sans-serif;font-size:7.8px;font-weight:normal;letter-spacing:0.5px;transform:scaleX(0.9200);transform-origin:50% 50%;--sx:0.92;--ax:130.35;--al:0.5;-webkit-text-stroke:0.1px #000;">ml</div><div class="t f" style="left:168.60px;top:31.66px;line-height:8px;color:#000;font-family:'Liberation Sans', sans-serif;font-size:8px;font-weight:normal;letter-spacing:0px;transform:scaleX(0.5437);transform-origin:0 50%;--w:17.4;--ax:168.6;--al:0;"><span style="display:inline-block;width:32.00px">メニュー</span></div><div class="t f" style="left:196.00px;top:31.66px;line-height:8px;color:#ffffff;font-family:'Liberation Sans', sans-serif;font-size:8px;font-weight:normal;letter-spacing:0px;transform:scaleX(0.9219);transform-origin:0 50%;--w:59;--ax:196;--al:0;-webkit-text-stroke:0.15px #fff;"><span style="display:inline-block;width:20.00px"><span style="display:inline-block;transform:scale(0.500,1.15);transform-origin:0 85%">エンシ゛ン</span></span><span style="display:inline-block;width:24.00px">回転数</span><span style="display:inline-block;width:20.00px;font-family:'Liberation Mono',monospace"><span style="display:inline-block;transform:scaleX(0.833);transform-origin:0 0">[rpm]</span></span></div><div class="t f" style="left:471.25px;top:31.95px;line-height:7.6px;color:#000;font-family:'Liberation Sans', sans-serif;font-size:7.6px;font-weight:normal;letter-spacing:0px;transform:scaleX(0.7368);transform-origin:50% 50%;--w:28;--ax:490.25;--al:0.5;"><span style="display:inline-block;width:38.00px">全画面表示</span></div><div class="t f" style="left:526.55px;top:31.95px;line-height:7.6px;color:#000;font-family:'Liberation Sans', sans-serif;font-size:7.6px;font-weight:normal;letter-spacing:0px;transform:scaleX(0.5703);transform-origin:50% 50%;--w:26;--ax:549.35;--al:0.5;"><span style="display:inline-block;width:45.60px">グラフタイプ</span></div><div class="t f" style="left:168.60px;top:152.36px;line-height:8px;color:#000;font-family:'Liberation Sans', sans-serif;font-size:8px;font-weight:normal;letter-spacing:0px;transform:scaleX(0.5437);transform-origin:0 50%;--w:17.4;--ax:168.6;--al:0;"><span style="display:inline-block;width:32.00px">メニュー</span></div><div class="t f" style="left:196.00px;top:152.36px;line-height:8px;color:#ffffff;font-family:'Liberation Sans', sans-serif;font-size:8px;font-weight:normal;letter-spacing:0px;transform:scaleX(0.9821);transform-origin:0 50%;--w:55;--ax:196;--al:0;-webkit-text-stroke:0.15px #fff;"><span style="display:inline-block;width:20.00px"><span style="display:inline-block;transform:scale(0.500,1.15);transform-origin:0 85%">エンシ゛ン</span></span><span style="display:inline-block;width:24.00px">負荷値</span><span style="display:inline-block;width:12.00px;font-family:'Liberation Mono',monospace"><span style="display:inline-block;transform:scaleX(0.833);transform-origin:0 0">[%]</span></span></div><div class="t f" style="left:471.25px;top:152.65px;line-height:7.6px;color:#000;font-family:'Liberation Sans', sans-serif;font-size:7.6px;font-weight:normal;letter-spacing:0px;transform:scaleX(0.7368);transform-origin:50% 50%;--w:28;--ax:490.25;--al:0.5;"><span style="display:inline-block;width:38.00px">全画面表示</span></div><div class="t f" style="left:526.55px;top:152.65px;line-height:7.6px;color:#000;font-family:'Liberation Sans', sans-serif;font-size:7.6px;font-weight:normal;letter-spacing:0px;transform:scaleX(0.5703);transform-origin:50% 50%;--w:26;--ax:549.35;--al:0.5;"><span style="display:inline-block;width:45.60px">グラフタイプ</span></div><div class="t f" style="left:168.60px;top:273.26px;line-height:8px;color:#000;font-family:'Liberation Sans', sans-serif;font-size:8px;font-weight:normal;letter-spacing:0px;transform:scaleX(0.5437);transform-origin:0 50%;--w:17.4;--ax:168.6;--al:0;"><span style="display:inline-block;width:32.00px">メニュー</span></div><div class="t f" style="left:196.00px;top:273.26px;line-height:8px;color:#ffffff;font-family:'Liberation Sans', sans-serif;font-size:8px;font-weight:normal;letter-spacing:0px;transform:scaleX(0.9423);transform-origin:0 50%;--w:49;--ax:196;--al:0;-webkit-text-stroke:0.15px #fff;"><span style="display:inline-block;width:40.00px">絶対負荷値</span><span style="display:inline-block;width:12.00px;font-family:'Liberation Mono',monospace"><span style="display:inline-block;transform:scaleX(0.833);transform-origin:0 0">[%]</span></span></div><div class="t f" style="left:471.25px;top:273.55px;line-height:7.6px;color:#000;font-family:'Liberation Sans', sans-serif;font-size:7.6px;font-weight:normal;letter-spacing:0px;transform:scaleX(0.7368);transform-origin:50% 50%;--w:28;--ax:490.25;--al:0.5;"><span style="display:inline-block;width:38.00px">全画面表示</span></div><div class="t f" style="left:526.55px;top:273.55px;line-height:7.6px;color:#000;font-family:'Liberation Sans', sans-serif;font-size:7.6px;font-weight:normal;letter-spacing:0px;transform:scaleX(0.5703);transform-origin:50% 50%;--w:26;--ax:549.35;--al:0.5;"><span style="display:inline-block;width:45.60px">グラフタイプ</span></div><div class="t f" style="left:163.80px;top:382.16px;line-height:8px;color:#000;font-family:'Liberation Sans', sans-serif;font-size:8px;font-weight:normal;letter-spacing:0px;transform:scaleX(0.7292);transform-origin:0 50%;--w:17.5;--ax:163.8;--al:0;"><span style="display:inline-block;width:24.00px;font-family:'Liberation Mono',monospace"><span style="display:inline-block;transform:scaleX(0.833);transform-origin:0 0">[sec.]</span></span></div><div class="t f" style="left:203.57px;top:382.16px;line-height:8px;color:#000;font-family:'Liberation Sans', sans-serif;font-size:8px;font-weight:normal;letter-spacing:0px;transform:scaleX(0.9000);transform-origin:50% 50%;--sx:0.9;--ax:205.8;--al:0.5;">0</div><div class="t f" style="left:242.20px;top:382.16px;line-height:8px;color:#000;font-family:'Liberation Sans', sans-serif;font-size:8px;font-weight:normal;letter-spacing:0px;transform:scaleX(0.9000);transform-origin:50% 50%;--sx:0.9;--ax:244.43;--al:0.5;">6</div><div class="t f" style="left:276.41px;top:382.16px;line-height:8px;color:#000;font-family:'Liberation Sans', sans-serif;font-size:8px;font-weight:normal;letter-spacing:0px;transform:scaleX(0.9000);transform-origin:50% 50%;--sx:0.9;--ax:280.86;--al:0.5;">12</div><div class="t f" style="left:315.04px;top:382.16px;line-height:8px;color:#000;font-family:'Liberation Sans', sans-serif;font-size:8px;font-weight:normal;letter-spacing:0px;transform:scaleX(0.9000);transform-origin:50% 50%;--sx:0.9;--ax:319.49;--al:0.5;">18</div><div class="t f" style="left:353.67px;top:382.16px;line-height:8px;color:#000;font-family:'Liberation Sans', sans-serif;font-size:8px;font-weight:normal;letter-spacing:0px;transform:scaleX(0.9000);transform-origin:50% 50%;--sx:0.9;--ax:358.12;--al:0.5;">24</div><div class="t f" style="left:392.30px;top:382.16px;line-height:8px;color:#000;font-family:'Liberation Sans', sans-serif;font-size:8px;font-weight:normal;letter-spacing:0px;transform:scaleX(0.9000);transform-origin:50% 50%;--sx:0.9;--ax:396.75;--al:0.5;">30</div><div class="t f" style="left:430.93px;top:382.16px;line-height:8px;color:#000;font-family:'Liberation Sans', sans-serif;font-size:8px;font-weight:normal;letter-spacing:0px;transform:scaleX(0.9000);transform-origin:50% 50%;--sx:0.9;--ax:435.38000000000005;--al:0.5;">36</div><div class="t f" style="left:469.56px;top:382.16px;line-height:8px;color:#000;font-family:'Liberation Sans', sans-serif;font-size:8px;font-weight:normal;letter-spacing:0px;transform:scaleX(0.9000);transform-origin:50% 50%;--sx:0.9;--ax:474.01000000000005;--al:0.5;">42</div><div class="t f" style="left:508.19px;top:382.16px;line-height:8px;color:#000;font-family:'Liberation Sans', sans-serif;font-size:8px;font-weight:normal;letter-spacing:0px;transform:scaleX(0.9000);transform-origin:50% 50%;--sx:0.9;--ax:512.6400000000001;--al:0.5;">48</div><div class="t f" style="left:546.82px;top:382.16px;line-height:8px;color:#000;font-family:'Liberation Sans', sans-serif;font-size:8px;font-weight:normal;letter-spacing:0px;transform:scaleX(0.9000);transform-origin:50% 50%;--sx:0.9;--ax:551.2700000000001;--al:0.5;">54</div><div class="t f" style="left:585.45px;top:382.16px;line-height:8px;color:#000;font-family:'Liberation Sans', sans-serif;font-size:8px;font-weight:normal;letter-spacing:0px;transform:scaleX(0.9000);transform-origin:50% 50%;--sx:0.9;--ax:589.9000000000001;--al:0.5;">60</div><div class="t f" style="left:195.35px;top:129.66px;line-height:8px;color:#2e3468;font-family:'Liberation Sans', sans-serif;font-size:8px;font-weight:bold;letter-spacing:0px;transform:scaleX(0.8400);transform-origin:100% 50%;--sx:0.84;--ax:199.8;--al:1;">0</div><div class="t f" style="left:186.44px;top:115.26px;line-height:8px;color:#2e3468;font-family:'Liberation Sans', sans-serif;font-size:8px;font-weight:bold;letter-spacing:0px;transform:scaleX(0.8400);transform-origin:100% 50%;--sx:0.84;--ax:199.8;--al:1;">500</div><div class="t f" style="left:182.00px;top:100.86px;line-height:8px;color:#2e3468;font-family:'Liberation Sans', sans-serif;font-size:8px;font-weight:bold;letter-spacing:0px;transform:scaleX(0.8400);transform-origin:100% 50%;--sx:0.84;--ax:199.8;--al:1;">1000</div><div class="t f" style="left:182.00px;top:86.46px;line-height:8px;color:#2e3468;font-family:'Liberation Sans', sans-serif;font-size:8px;font-weight:bold;letter-spacing:0px;transform:scaleX(0.8400);transform-origin:100% 50%;--sx:0.84;--ax:199.8;--al:1;">1500</div><div class="t f" style="left:182.00px;top:72.06px;line-height:8px;color:#2e3468;font-family:'Liberation Sans', sans-serif;font-size:8px;font-weight:bold;letter-spacing:0px;transform:scaleX(0.8400);transform-origin:100% 50%;--sx:0.84;--ax:199.8;--al:1;">2000</div><div class="t f" style="left:182.00px;top:57.66px;line-height:8px;color:#2e3468;font-family:'Liberation Sans', sans-serif;font-size:8px;font-weight:bold;letter-spacing:0px;transform:scaleX(0.8400);transform-origin:100% 50%;--sx:0.84;--ax:199.8;--al:1;">2500</div><div class="t f" style="left:195.35px;top:250.86px;line-height:8px;color:#a66a36;font-family:'Liberation Sans', sans-serif;font-size:8px;font-weight:bold;letter-spacing:0px;transform:scaleX(0.8400);transform-origin:100% 50%;--sx:0.84;--ax:199.8;--al:1;">0</div><div class="t f" style="left:190.89px;top:235.38px;line-height:8px;color:#a66a36;font-family:'Liberation Sans', sans-serif;font-size:8px;font-weight:bold;letter-spacing:0px;transform:scaleX(0.8400);transform-origin:100% 50%;--sx:0.84;--ax:199.8;--al:1;">20</div><div class="t f" style="left:190.89px;top:219.90px;line-height:8px;color:#a66a36;font-family:'Liberation Sans', sans-serif;font-size:8px;font-weight:bold;letter-spacing:0px;transform:scaleX(0.8400);transform-origin:100% 50%;--sx:0.84;--ax:199.8;--al:1;">40</div><div class="t f" style="left:190.89px;top:204.42px;line-height:8px;color:#a66a36;font-family:'Liberation Sans', sans-serif;font-size:8px;font-weight:bold;letter-spacing:0px;transform:scaleX(0.8400);transform-origin:100% 50%;--sx:0.84;--ax:199.8;--al:1;">60</div><div class="t f" style="left:190.89px;top:188.94px;line-height:8px;color:#a66a36;font-family:'Liberation Sans', sans-serif;font-size:8px;font-weight:bold;letter-spacing:0px;transform:scaleX(0.8400);transform-origin:100% 50%;--sx:0.84;--ax:199.8;--al:1;">80</div><div class="t f" style="left:186.44px;top:173.46px;line-height:8px;color:#a66a36;font-family:'Liberation Sans', sans-serif;font-size:8px;font-weight:bold;letter-spacing:0px;transform:scaleX(0.8400);transform-origin:100% 50%;--sx:0.84;--ax:199.8;--al:1;">100</div><div class="t f" style="left:195.35px;top:364.96px;line-height:8px;color:#4a8a3a;font-family:'Liberation Sans', sans-serif;font-size:8px;font-weight:bold;letter-spacing:0px;transform:scaleX(0.8400);transform-origin:100% 50%;--sx:0.84;--ax:199.8;--al:1;">0</div><div class="t f" style="left:190.89px;top:340.76px;line-height:8px;color:#4a8a3a;font-family:'Liberation Sans', sans-serif;font-size:8px;font-weight:bold;letter-spacing:0px;transform:scaleX(0.8400);transform-origin:100% 50%;--sx:0.84;--ax:199.8;--al:1;">50</div><div class="t f" style="left:186.44px;top:316.56px;line-height:8px;color:#4a8a3a;font-family:'Liberation Sans', sans-serif;font-size:8px;font-weight:bold;letter-spacing:0px;transform:scaleX(0.8400);transform-origin:100% 50%;--sx:0.84;--ax:199.8;--al:1;">100</div><div class="t f" style="left:186.44px;top:292.36px;line-height:8px;color:#4a8a3a;font-family:'Liberation Sans', sans-serif;font-size:8px;font-weight:bold;letter-spacing:0px;transform:scaleX(0.8400);transform-origin:100% 50%;--sx:0.84;--ax:199.8;--al:1;">150</div><div class="t f" style="left:2.60px;top:397.05px;line-height:7.4px;color:#fff;font-family:'Liberation Sans', sans-serif;font-size:7.4px;font-weight:normal;letter-spacing:0px;transform:scaleX(0.7209);transform-origin:50% 50%;--w:32;--ax:24.8;--al:0.5;"><span style="display:inline-block;width:44.40px">サービス情報</span></div><div class="t f" style="left:17.40px;top:403.45px;line-height:7.4px;color:#fff;font-family:'Liberation Sans', sans-serif;font-size:7.4px;font-weight:normal;letter-spacing:0px;transform:scaleX(0.8786);transform-origin:50% 50%;--w:13;--ax:24.8;--al:0.5;"><span style="display:inline-block;width:14.80px">検索</span></div><div class="t f" style="left:61.75px;top:399.77px;line-height:8.4px;color:#fff;font-family:'Liberation Sans', sans-serif;font-size:8.4px;font-weight:normal;letter-spacing:0px;transform:scaleX(0.8258);transform-origin:50% 50%;--w:10;--ax:67.8;--al:0.5;">&lt; &lt;</div><div class="t f" style="left:16.50px;top:420.16px;line-height:8px;color:#fff;font-family:'Liberation Sans', sans-serif;font-size:8px;font-weight:normal;letter-spacing:0px;transform:scaleX(0.8125);transform-origin:50% 50%;--w:13;--ax:24.5;--al:0.5;"><span style="display:inline-block;width:16.00px">戻る</span></div><div class="t f" style="left:47.60px;top:420.16px;line-height:8px;color:#fff;font-family:'Liberation Sans', sans-serif;font-size:8px;font-weight:normal;letter-spacing:0px;transform:scaleX(0.8500);transform-origin:50% 50%;--w:34;--ax:67.6;--al:0.5;"><span style="display:inline-block;width:40.00px">重ねて表示</span></div><div class="t f" style="left:237.20px;top:403.96px;line-height:8px;color:#000;font-family:'Liberation Sans', sans-serif;font-size:8px;font-weight:normal;letter-spacing:0px;transform:scaleX(0.9688);transform-origin:0 50%;--w:31;--ax:237.2;--al:0;"><span style="display:inline-block;width:32.00px">初期診断</span></div><div class="t f" style="left:246.20px;top:420.76px;line-height:8px;color:#000;font-family:'Liberation Sans', sans-serif;font-size:8px;font-weight:normal;letter-spacing:0px;transform:scaleX(0.8393);transform-origin:0 50%;--w:47;--ax:246.2;--al:0;"><span style="display:inline-block;width:56.00px">昇順に並べ替え</span></div><div class="t f" style="left:520.06px;top:420.80px;line-height:10px;color:#ffffff;font-family:'Liberation Sans', sans-serif;font-size:10px;font-weight:normal;letter-spacing:0px;transform:scaleX(0.8993);transform-origin:50% 50%;--w:6;--ax:523.4;--al:0.5;">A</div><div class="t f" style="left:527.85px;top:421.04px;line-height:9.5px;color:#ffffff;font-family:'Liberation Sans', sans-serif;font-size:9.5px;font-weight:normal;letter-spacing:0px;transform:scaleX(0.9474);transform-origin:50% 50%;--w:9;--ax:532.6;--al:0.5;"><span style="display:inline-block;width:9.50px">般</span></div><div class="t f" style="left:567.24px;top:421.17px;line-height:8.4px;color:#000;font-family:'Liberation Sans', sans-serif;font-size:8.4px;font-weight:bold;letter-spacing:0px;--sx:1.0;--ax:569.8;--al:0.5;">?</div><div class="t f" style="left:577.74px;top:419.09px;line-height:4.6px;color:#e0e8ff;font-family:'Liberation Sans', sans-serif;font-size:4.6px;font-weight:normal;letter-spacing:0px;transform:scaleX(0.7990);transform-origin:50% 50%;--w:10;--ax:584;--al:0.5;">CAPS</div><div class="t f" style="left:577.74px;top:426.79px;line-height:4.6px;color:#e0e8ff;font-family:'Liberation Sans', sans-serif;font-size:4.6px;font-weight:normal;letter-spacing:0px;transform:scaleX(0.7990);transform-origin:50% 50%;--w:10;--ax:584;--al:0.5;">KANA</div><script>
(function(){var L=document.querySelectorAll('.f');for(var i=0;i<L.length;i++){var e=L[i],st=e.style;
var w=parseFloat(st.getPropertyValue('--w')),sx=parseFloat(st.getPropertyValue('--sx')),ax=parseFloat(st.getPropertyValue('--ax')),al=parseFloat(st.getPropertyValue('--al'));
st.transform='none';var n=e.getBoundingClientRect().width;if(!(n>0))continue;
var s=isNaN(w)?(isNaN(sx)?1:sx):w/n;st.left=(ax-al*n)+'px';st.transformOrigin=(al*100)+'% 50%';st.transform='scaleX('+s+')';}})();
</script></body></html>
